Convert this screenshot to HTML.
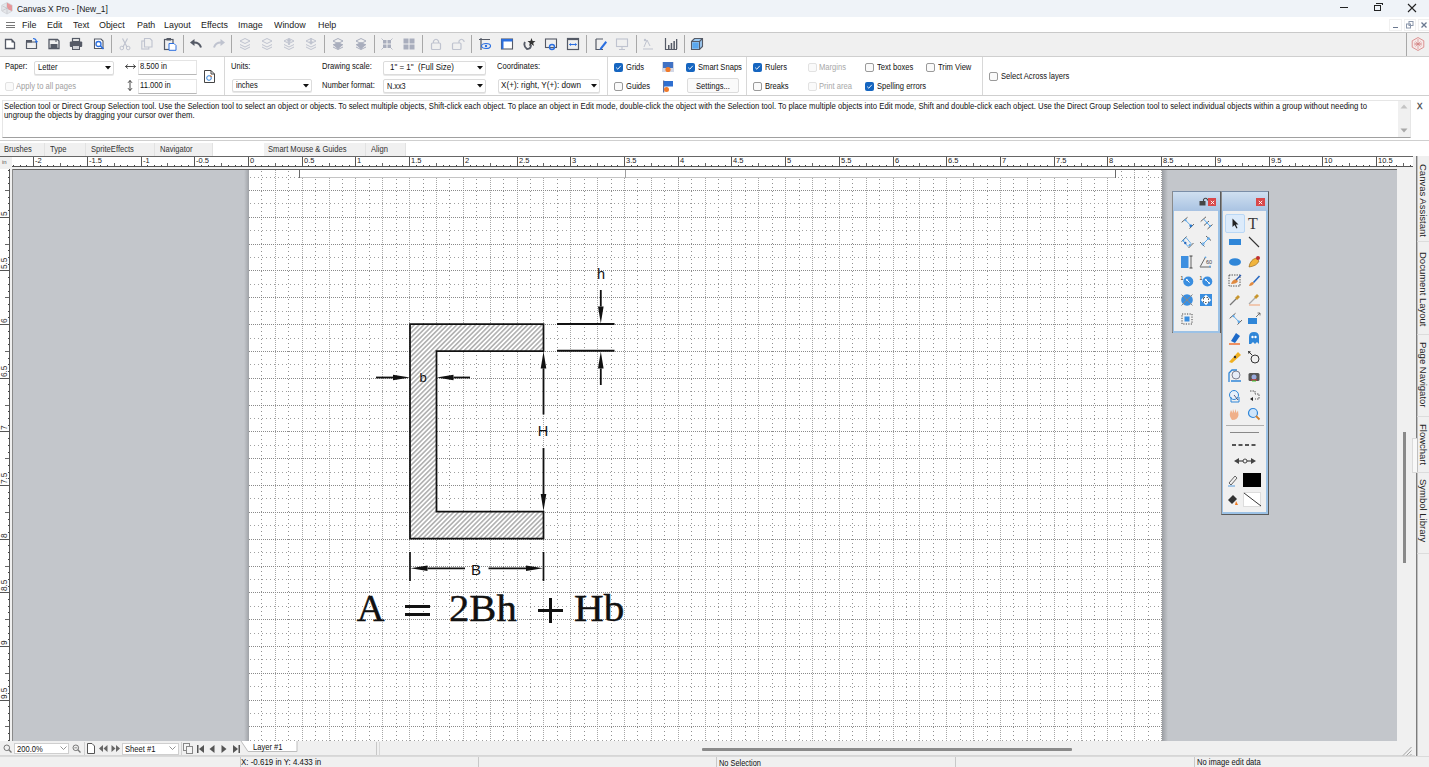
<!DOCTYPE html><html><head><meta charset="utf-8"><style>
html,body{margin:0;padding:0;}
body{width:1429px;height:767px;overflow:hidden;position:relative;background:#f0f0f0;font-family:"Liberation Sans",sans-serif;}
div,svg{box-sizing:border-box;}
svg{position:absolute;}
</style></head><body>
<div style="position:absolute;left:0px;top:0px;width:1429px;height:17px;background:#eff3f8"></div>
<div style="position:absolute;left:17px;top:5.24px;font-size:9.16px;line-height:9.16px;color:#1a1a1a;white-space:nowrap;transform:scaleX(0.9259);transform-origin:0 0;">Canvas X Pro - [New_1]</div>
<div style="position:absolute;left:1340px;top:7px;width:8px;height:1px;background:#222"></div>
<div style="position:absolute;left:1374px;top:5px;width:7px;height:6px;border:1px solid #222"></div>
<div style="position:absolute;left:1376px;top:3px;width:7px;height:2px;border-top:1px solid #222;border-right:1px solid #222"></div>
<svg style="left:1407px;top:3px" width="10" height="10"><path d="M1 1L9 9M9 1L1 9" stroke="#222" stroke-width="1.1"/></svg>
<div style="position:absolute;left:0px;top:17px;width:1429px;height:15px;background:#fff"></div>
<div style="position:absolute;left:6px;top:22.0px;width:9px;height:1px;background:#777"></div>
<div style="position:absolute;left:6px;top:24.5px;width:9px;height:1px;background:#777"></div>
<div style="position:absolute;left:6px;top:27.0px;width:9px;height:1px;background:#777"></div>
<div style="position:absolute;left:21.7px;top:20.31px;font-size:9.79px;line-height:9.79px;color:#1a1a1a;white-space:nowrap;transform:scaleX(0.9091);transform-origin:0 0;">File</div>
<div style="position:absolute;left:46.6px;top:20.31px;font-size:9.79px;line-height:9.79px;color:#1a1a1a;white-space:nowrap;transform:scaleX(0.9091);transform-origin:0 0;">Edit</div>
<div style="position:absolute;left:72.8px;top:20.31px;font-size:9.79px;line-height:9.79px;color:#1a1a1a;white-space:nowrap;transform:scaleX(0.9091);transform-origin:0 0;">Text</div>
<div style="position:absolute;left:99.4px;top:20.31px;font-size:9.79px;line-height:9.79px;color:#1a1a1a;white-space:nowrap;transform:scaleX(0.9091);transform-origin:0 0;">Object</div>
<div style="position:absolute;left:136.5px;top:20.31px;font-size:9.79px;line-height:9.79px;color:#1a1a1a;white-space:nowrap;transform:scaleX(0.9091);transform-origin:0 0;">Path</div>
<div style="position:absolute;left:164px;top:20.31px;font-size:9.79px;line-height:9.79px;color:#1a1a1a;white-space:nowrap;transform:scaleX(0.9091);transform-origin:0 0;">Layout</div>
<div style="position:absolute;left:201.3px;top:20.31px;font-size:9.79px;line-height:9.79px;color:#1a1a1a;white-space:nowrap;transform:scaleX(0.9091);transform-origin:0 0;">Effects</div>
<div style="position:absolute;left:238px;top:20.31px;font-size:9.79px;line-height:9.79px;color:#1a1a1a;white-space:nowrap;transform:scaleX(0.9091);transform-origin:0 0;">Image</div>
<div style="position:absolute;left:274px;top:20.31px;font-size:9.79px;line-height:9.79px;color:#1a1a1a;white-space:nowrap;transform:scaleX(0.9091);transform-origin:0 0;">Window</div>
<div style="position:absolute;left:317.9px;top:20.31px;font-size:9.79px;line-height:9.79px;color:#1a1a1a;white-space:nowrap;transform:scaleX(0.9091);transform-origin:0 0;">Help</div>
<div style="position:absolute;left:0px;top:32px;width:1429px;height:1px;background:#c9c9c9"></div>
<div style="position:absolute;left:0px;top:33px;width:1429px;height:23px;background:#f0f0f0"></div>
<div style="position:absolute;left:0px;top:56px;width:1429px;height:1px;background:#cfcfcf"></div>
<svg style="left:2.5999999999999996px;top:37.0px" width="14" height="14"><path d="M2.5,2.5 L8.5,2.5 L11.5,5.5 L11.5,11.5 L2.5,11.5Z" fill="#fff" stroke="#555a66" stroke-width="1.3"/><path d="M8.5,2.5 L11.5,5.5 L8.5,5.5Z" fill="#555a66"/></svg>
<svg style="left:25.0px;top:37.0px" width="14" height="14"><path d="M1.5,5 L11.5,5 L11.5,11.5 L1.5,11.5Z" fill="none" stroke="#555a66" stroke-width="1.2"/><rect x="1" y="3" width="6" height="2.5" fill="#555a66"/><path d="M8,1.5 Q11,1.5 11.5,4.5" stroke="#2b6fe0" stroke-width="1.1" fill="none"/><path d="M9.8,4 L13,4 L11.4,6.5Z" fill="#2b6fe0"/></svg>
<svg style="left:47.0px;top:37.0px" width="14" height="14"><path d="M2,2.5 L10.5,2.5 L12,4 L12,11.5 L2,11.5Z" fill="none" stroke="#555a66" stroke-width="1.3"/><rect x="3.5" y="7" width="7" height="4.5" fill="#555a66"/><rect x="8.5" y="3" width="1" height="2" fill="#555a66"/></svg>
<svg style="left:69.0px;top:37.0px" width="14" height="14"><rect x="3.5" y="1.5" width="7" height="3" fill="none" stroke="#555a66" stroke-width="1.2"/><rect x="0.8" y="4.5" width="12.4" height="5.5" rx="1" fill="#555a66"/><rect x="3.5" y="8.5" width="7" height="4" fill="#cfd1d6" stroke="#555a66" stroke-width="1"/></svg>
<svg style="left:91.8px;top:37.0px" width="14" height="14"><path d="M2.5,2 L9,2 L11,4 L11,11.5 L2.5,11.5Z" fill="#fff" stroke="#555a66" stroke-width="1.1"/><circle cx="6.5" cy="7" r="2.5" fill="none" stroke="#2b6fe0" stroke-width="1.3"/><path d="M8.3,8.8 L11.5,12" stroke="#2b6fe0" stroke-width="1.6"/></svg>
<div style="position:absolute;left:111.3px;top:35px;width:1px;height:18px;background:#a8a8a8"></div>
<div style="position:absolute;left:182.5px;top:35px;width:1px;height:18px;background:#a8a8a8"></div>
<div style="position:absolute;left:231px;top:35px;width:1px;height:18px;background:#a8a8a8"></div>
<div style="position:absolute;left:324.4px;top:35px;width:1px;height:18px;background:#a8a8a8"></div>
<div style="position:absolute;left:373.6px;top:35px;width:1px;height:18px;background:#a8a8a8"></div>
<div style="position:absolute;left:421.8px;top:35px;width:1px;height:18px;background:#a8a8a8"></div>
<div style="position:absolute;left:471.3px;top:35px;width:1px;height:18px;background:#a8a8a8"></div>
<div style="position:absolute;left:586px;top:35px;width:1px;height:18px;background:#a8a8a8"></div>
<div style="position:absolute;left:635.6px;top:35px;width:1px;height:18px;background:#a8a8a8"></div>
<div style="position:absolute;left:684px;top:35px;width:1px;height:18px;background:#a8a8a8"></div>
<svg style="left:118.3px;top:37.0px" width="14" height="14"><path d="M4.5,1.5 L9,10 M9.5,1.5 L5,10" stroke="#bfc3cf" stroke-width="1.2"/><circle cx="3.8" cy="11" r="1.8" fill="none" stroke="#bfc3cf" stroke-width="1"/><circle cx="10.2" cy="11" r="1.8" fill="none" stroke="#bfc3cf" stroke-width="1"/></svg>
<svg style="left:140.4px;top:37.0px" width="14" height="14"><rect x="1.8" y="4" width="7" height="8" fill="none" stroke="#bfc3cf" stroke-width="1.1"/><path d="M4.5,1.5 L10,1.5 L12,3.5 L12,10 L4.5,10Z" fill="#f0f0f0" stroke="#bfc3cf" stroke-width="1.1"/></svg>
<svg style="left:163.0px;top:37.0px" width="14" height="14"><rect x="1.5" y="2.5" width="8.5" height="10" fill="none" stroke="#555a66" stroke-width="1.2"/><rect x="3.5" y="1" width="4.5" height="2.5" fill="#555a66"/><path d="M6,6.5 L11,6.5 L13,8.5 L13,13.3 L6,13.3Z" fill="#fff" stroke="#2b6fe0" stroke-width="1"/></svg>
<svg style="left:189.0px;top:37.0px" width="14" height="14"><path d="M12,10.5 Q10.5,5 4,5.5" stroke="#555a66" stroke-width="2" fill="none"/><path d="M1,5.5 L5.5,2 L5.5,9Z" fill="#555a66"/></svg>
<svg style="left:211.5px;top:37.0px" width="14" height="14"><path d="M2,10.5 Q3.5,5 10,5.5" stroke="#bfc3cf" stroke-width="2" fill="none"/><path d="M13,5.5 L8.5,2 L8.5,9Z" fill="#bfc3cf"/></svg>
<svg style="left:237.8px;top:37.0px" width="14" height="14"><path d="M7,1.5 L12,4 L7,6.5 L2,4Z" fill="none" stroke="#bfc3cf" stroke-width="1"/><path d="M2,7.5 L7,10 L12,7.5" fill="none" stroke="#bfc3cf" stroke-width="1"/><path d="M2,10 L7,12.5 L12,10" fill="none" stroke="#bfc3cf" stroke-width="1"/></svg>
<svg style="left:260.0px;top:37.0px" width="14" height="14"><path d="M7,1.5 L12,4 L7,6.5 L2,4Z" fill="none" stroke="#bfc3cf" stroke-width="1"/><path d="M2,7.5 L7,10 L12,7.5" fill="none" stroke="#bfc3cf" stroke-width="1"/><path d="M2,10 L7,12.5 L12,10" fill="none" stroke="#bfc3cf" stroke-width="1"/></svg>
<svg style="left:282.0px;top:37.0px" width="14" height="14"><path d="M7,1.5 L12,4 L7,6.5 L2,4Z" fill="none" stroke="#bfc3cf" stroke-width="1"/><path d="M2,7.5 L7,10 L12,7.5" fill="none" stroke="#bfc3cf" stroke-width="1"/><path d="M2,10 L7,12.5 L12,10" fill="none" stroke="#bfc3cf" stroke-width="1"/><path d="M7,1 L9.5,4.5 L4.5,4.5Z M6.2,4.5 H7.8 V8 H6.2Z" fill="#bfc3cf"/></svg>
<svg style="left:304.0px;top:37.0px" width="14" height="14"><path d="M7,1.5 L12,4 L7,6.5 L2,4Z" fill="none" stroke="#bfc3cf" stroke-width="1"/><path d="M2,7.5 L7,10 L12,7.5" fill="none" stroke="#bfc3cf" stroke-width="1"/><path d="M2,10 L7,12.5 L12,10" fill="none" stroke="#bfc3cf" stroke-width="1"/><path d="M7,8 L9.5,4.5 L4.5,4.5Z M6.2,1 H7.8 V4.5 H6.2Z" fill="#bfc3cf"/></svg>
<svg style="left:331.0px;top:37.0px" width="14" height="14"><path d="M7,1.5 L12,4 L7,6.5 L2,4Z" fill="none" stroke="#a9aebd" stroke-width="1"/><path d="M2,7.5 L7,10 L12,7.5" fill="none" stroke="#a9aebd" stroke-width="1"/><path d="M2,10 L7,12.5 L12,10" fill="none" stroke="#a9aebd" stroke-width="1"/><path d="M2,7.5 L7,5 L12,7.5 L7,12.5Z" fill="#a9aebd"/></svg>
<svg style="left:353.5px;top:37.0px" width="14" height="14"><path d="M7,1.5 L12,4 L7,6.5 L2,4Z" fill="none" stroke="#a9aebd" stroke-width="1"/><path d="M2,7.5 L7,10 L12,7.5" fill="none" stroke="#a9aebd" stroke-width="1"/><path d="M2,10 L7,12.5 L12,10" fill="none" stroke="#a9aebd" stroke-width="1"/><path d="M2,7.5 L7,5 L12,7.5 L7,12.5Z" fill="#a9aebd"/></svg>
<svg style="left:380.0px;top:37.0px" width="14" height="14"><rect x="3" y="3" width="3.5" height="3.5" fill="#a9aebd"/><rect x="7.5" y="3" width="3.5" height="3.5" fill="#a9aebd"/><rect x="3" y="7.5" width="3.5" height="3.5" fill="#a9aebd"/><rect x="7.5" y="7.5" width="3.5" height="3.5" fill="#a9aebd"/><path d="M1.5,1.5 L3,3 M12.5,1.5 L11,3 M1.5,12.5 L3,11 M12.5,12.5 L11,11" stroke="#a9aebd" stroke-width="0.8"/></svg>
<svg style="left:402.0px;top:37.0px" width="14" height="14"><rect x="1.5" y="1.5" width="5" height="5" fill="#a9aebd"/><rect x="7.5" y="1.5" width="5" height="5" fill="#a9aebd"/><rect x="1.5" y="7.5" width="5" height="5" fill="#a9aebd"/><rect x="7.5" y="7.5" width="5" height="5" fill="#a9aebd"/></svg>
<svg style="left:428.7px;top:37.0px" width="14" height="14"><rect x="2.5" y="6" width="9" height="6.5" rx="1" fill="none" stroke="#bfc3cf" stroke-width="1.2"/><path d="M4.5,6 V4 Q7,0.5 9.5,4 V6" fill="none" stroke="#bfc3cf" stroke-width="1.2"/></svg>
<svg style="left:451.0px;top:37.0px" width="14" height="14"><rect x="1.5" y="6" width="8.5" height="6.5" rx="1" fill="none" stroke="#bfc3cf" stroke-width="1.2"/><path d="M8,6 V4 Q10.5,0.5 13,4 V5" fill="none" stroke="#bfc3cf" stroke-width="1.2"/></svg>
<svg style="left:478.0px;top:37.0px" width="14" height="14"><path d="M1,2.5 H12 M3,1 V13" stroke="#555a66" stroke-width="1.2"/><ellipse cx="8" cy="9" rx="4.5" ry="2.5" fill="none" stroke="#2b6fe0" stroke-width="1.2"/><circle cx="8" cy="9" r="1.2" fill="#2b6fe0"/></svg>
<svg style="left:500.0px;top:37.0px" width="14" height="14"><rect x="1.5" y="2" width="11" height="10" fill="#fff" stroke="#555a66" stroke-width="1.1"/><rect x="1.5" y="2" width="11" height="2.5" fill="#2b6fe0"/><rect x="1.5" y="2" width="2" height="10" fill="#2b6fe0"/></svg>
<svg style="left:521.8px;top:37.0px" width="14" height="14"><path d="M3,5 Q1,9 5,12 Q9,12 9,8" fill="none" stroke="#555a66" stroke-width="1.8"/><path d="M9.5,1 L10.6,4 L13.5,4 L11.2,6 L12,9 L9.5,7.2 L7,9 L7.8,6 L5.5,4 L8.4,4Z" fill="#333"/></svg>
<svg style="left:544.0px;top:37.0px" width="14" height="14"><rect x="1.5" y="2" width="11" height="8.5" fill="none" stroke="#555a66" stroke-width="1.1"/><circle cx="8" cy="10" r="2.5" fill="none" stroke="#2b6fe0" stroke-width="1.4"/></svg>
<svg style="left:566.0px;top:37.0px" width="14" height="14"><rect x="1.5" y="1.5" width="11" height="11" fill="none" stroke="#555a66" stroke-width="1.2"/><rect x="1.5" y="1.5" width="11" height="1.6" fill="#555a66"/><path d="M3.5,7.5 H10.5" stroke="#2b6fe0" stroke-width="1.1"/><path d="M3,7.5 L5,6 L5,9Z M11,7.5 L9,6 L9,9Z" fill="#2b6fe0"/></svg>
<svg style="left:593.5px;top:37.0px" width="14" height="14"><path d="M2,2 H9 M2,2 V12.5 H9" fill="none" stroke="#555a66" stroke-width="1.2"/><path d="M6,11 L11.5,4 L13,5.5 L7.5,12.5 L5.5,13Z" fill="#2b6fe0"/></svg>
<svg style="left:615.3px;top:37.0px" width="14" height="14"><rect x="1.5" y="2" width="11" height="7.5" fill="none" stroke="#bfc3cf" stroke-width="1.1"/><path d="M7,9.5 V12 M4,12.5 H10" stroke="#bfc3cf" stroke-width="1.1"/></svg>
<svg style="left:641.3px;top:37.0px" width="14" height="14"><path d="M2,12 H12 M3,10 L6,3 L9,9" fill="none" stroke="#bfc3cf" stroke-width="1"/><circle cx="4" cy="3" r="1.2" fill="#bfc3cf"/></svg>
<svg style="left:664.0px;top:37.0px" width="14" height="14"><path d="M1.5,1 V12.5 H13" fill="none" stroke="#555a66" stroke-width="1.2"/><rect x="4" y="8" width="1.5" height="4" fill="#555a66"/><rect x="6.7" y="6" width="1.5" height="6" fill="#555a66"/><rect x="9.4" y="4" width="1.5" height="8" fill="#555a66"/><rect x="12" y="2" width="1.3" height="10" fill="#555a66"/></svg>
<svg style="left:690.4px;top:37.0px" width="14" height="14"><path d="M1.5,4.5 L4.5,1.5 L12.5,1.5 L12.5,9.5 L9.5,12.5 L1.5,12.5Z" fill="#9cc8f0" stroke="#555a66" stroke-width="1.1"/><path d="M1.5,4.5 H9.5 V12.5 M9.5,4.5 L12.5,1.5" fill="none" stroke="#555a66" stroke-width="1.1"/><rect x="2.5" y="5.5" width="6" height="6" fill="#5aa7ee"/></svg>
<div style="position:absolute;left:1405.5px;top:33px;width:1px;height:23px;background:#a8a8a8"></div>
<svg style="left:1410.8px;top:36.8px" width="14" height="14"><path d="M7,0.5 L12.8,3.8 L12.8,10.2 L7,13.5 L1.2,10.2 L1.2,3.8Z" fill="#f6e8e8" stroke="#d98a8a" stroke-width="0.9"/><path d="M3,6 L11,8 M3,8 L11,6 M7,2 V12 M4.5,4.5 L9.5,9.5 M9.5,4.5 L4.5,9.5" stroke="#d07a7a" stroke-width="0.6"/></svg>
<svg style="left:0.0px;top:1.0px" width="14" height="14"><path d="M7,1.5 L12.3,4.3 L12.3,10 L7,13 L1.7,10 L1.7,4.3Z" fill="#e4e6ea" stroke="#d0d2d6" stroke-width="0.8"/><path d="M2.5,5 L11.5,9.5 M2.5,9.5 L11.5,5 M7,2 V12.5" stroke="#b8bcc2" stroke-width="0.6"/><path d="M7,1.8 L12,4.5 L12,10 L8.5,8.5 L7,6Z" fill="#e88a8e" opacity="0.85"/></svg>
<div style="position:absolute;left:1389px;top:18.8px;width:12.5px;height:12px;background:#fff;border:1px solid #f0f0f0"></div>
<div style="position:absolute;left:1403.7px;top:18.8px;width:12.5px;height:12px;background:#fff;border:1px solid #f0f0f0"></div>
<div style="position:absolute;left:1417.8px;top:18.8px;width:12px;height:12px;background:#fff;border:1px solid #f0f0f0"></div>
<div style="position:absolute;left:1393px;top:26.5px;width:5px;height:1.5px;background:#6b7890"></div>
<svg style="left:1406px;top:21px" width="8" height="8"><rect x="0.5" y="3" width="4" height="4" fill="none" stroke="#8a96aa"/><rect x="3" y="0.5" width="4" height="4" fill="none" stroke="#8a96aa"/></svg>
<svg style="left:1421px;top:22px" width="6" height="6"><path d="M0.5,0.5 L5.5,5.5 M5.5,0.5 L0.5,5.5" stroke="#6b7890" stroke-width="1.3"/></svg>
<div style="position:absolute;left:0px;top:57px;width:1429px;height:38px;background:#fff"></div>
<div style="position:absolute;left:0px;top:95px;width:1429px;height:1px;background:#cfcfcf"></div>
<div style="position:absolute;left:0px;top:96px;width:1429px;height:45px;background:#fff"></div>
<div style="position:absolute;left:2px;top:100px;width:1409px;height:38px;background:#fff;border:1px solid #e6e6e6;border-bottom:1px solid #a0a0a0"></div>
<div style="position:absolute;left:0px;top:140px;width:1429px;height:1px;background:#cfcfcf"></div>
<div style="position:absolute;left:0px;top:141px;width:1429px;height:15px;background:#fff"></div>
<div style="position:absolute;left:0px;top:156px;width:1413px;height:11px;background:#fff"></div>
<div style="position:absolute;left:0px;top:156px;width:1413px;height:1px;background:#666"></div>
<div style="position:absolute;left:12px;top:166px;width:1401px;height:1px;background:#555"></div>
<div style="position:absolute;left:0px;top:157px;width:12px;height:12px;background:#f0f0f0"></div>
<div style="position:absolute;left:12px;top:169px;width:1385px;height:572px;background:#c3c6cb"></div>
<div style="position:absolute;left:12px;top:169px;width:1401px;height:1px;background:#666"></div>
<div style="position:absolute;left:248px;top:170px;width:914px;height:571px;background:#fff"></div>
<svg style="left:0;top:0" width="1429" height="767" shape-rendering="crispEdges"><clipPath id="pg"><rect x="249" y="170" width="913" height="571"/></clipPath><g clip-path="url(#pg)"><line x1="261.5" y1="171" x2="261.5" y2="741" stroke="#909090" stroke-dasharray="1 3"/><line x1="275.5" y1="170" x2="275.5" y2="741" stroke="#a6a6a6" stroke-dasharray="1 1"/><line x1="288.5" y1="171" x2="288.5" y2="741" stroke="#909090" stroke-dasharray="1 3"/><line x1="302.5" y1="170" x2="302.5" y2="741" stroke="#a6a6a6" stroke-dasharray="1 1"/><line x1="315.5" y1="171" x2="315.5" y2="741" stroke="#909090" stroke-dasharray="1 3"/><line x1="329.5" y1="170" x2="329.5" y2="741" stroke="#a6a6a6" stroke-dasharray="1 1"/><line x1="342.5" y1="171" x2="342.5" y2="741" stroke="#909090" stroke-dasharray="1 3"/><line x1="355.5" y1="170" x2="355.5" y2="741" stroke="#a6a6a6" stroke-dasharray="1 1"/><line x1="369.5" y1="171" x2="369.5" y2="741" stroke="#909090" stroke-dasharray="1 3"/><line x1="382.5" y1="170" x2="382.5" y2="741" stroke="#a6a6a6" stroke-dasharray="1 1"/><line x1="396.5" y1="171" x2="396.5" y2="741" stroke="#909090" stroke-dasharray="1 3"/><line x1="409.5" y1="170" x2="409.5" y2="741" stroke="#a6a6a6" stroke-dasharray="1 1"/><line x1="423.5" y1="171" x2="423.5" y2="741" stroke="#909090" stroke-dasharray="1 3"/><line x1="436.5" y1="170" x2="436.5" y2="741" stroke="#a6a6a6" stroke-dasharray="1 1"/><line x1="449.5" y1="171" x2="449.5" y2="741" stroke="#909090" stroke-dasharray="1 3"/><line x1="463.5" y1="170" x2="463.5" y2="741" stroke="#a6a6a6" stroke-dasharray="1 1"/><line x1="476.5" y1="171" x2="476.5" y2="741" stroke="#909090" stroke-dasharray="1 3"/><line x1="490.5" y1="170" x2="490.5" y2="741" stroke="#a6a6a6" stroke-dasharray="1 1"/><line x1="503.5" y1="171" x2="503.5" y2="741" stroke="#909090" stroke-dasharray="1 3"/><line x1="517.5" y1="170" x2="517.5" y2="741" stroke="#a6a6a6" stroke-dasharray="1 1"/><line x1="530.5" y1="171" x2="530.5" y2="741" stroke="#909090" stroke-dasharray="1 3"/><line x1="543.5" y1="170" x2="543.5" y2="741" stroke="#a6a6a6" stroke-dasharray="1 1"/><line x1="557.5" y1="171" x2="557.5" y2="741" stroke="#909090" stroke-dasharray="1 3"/><line x1="570.5" y1="170" x2="570.5" y2="741" stroke="#a6a6a6" stroke-dasharray="1 1"/><line x1="584.5" y1="171" x2="584.5" y2="741" stroke="#909090" stroke-dasharray="1 3"/><line x1="597.5" y1="170" x2="597.5" y2="741" stroke="#a6a6a6" stroke-dasharray="1 1"/><line x1="611.5" y1="171" x2="611.5" y2="741" stroke="#909090" stroke-dasharray="1 3"/><line x1="624.5" y1="170" x2="624.5" y2="741" stroke="#a6a6a6" stroke-dasharray="1 1"/><line x1="637.5" y1="171" x2="637.5" y2="741" stroke="#909090" stroke-dasharray="1 3"/><line x1="651.5" y1="170" x2="651.5" y2="741" stroke="#a6a6a6" stroke-dasharray="1 1"/><line x1="664.5" y1="171" x2="664.5" y2="741" stroke="#909090" stroke-dasharray="1 3"/><line x1="678.5" y1="170" x2="678.5" y2="741" stroke="#a6a6a6" stroke-dasharray="1 1"/><line x1="691.5" y1="171" x2="691.5" y2="741" stroke="#909090" stroke-dasharray="1 3"/><line x1="705.5" y1="170" x2="705.5" y2="741" stroke="#a6a6a6" stroke-dasharray="1 1"/><line x1="718.5" y1="171" x2="718.5" y2="741" stroke="#909090" stroke-dasharray="1 3"/><line x1="731.5" y1="170" x2="731.5" y2="741" stroke="#a6a6a6" stroke-dasharray="1 1"/><line x1="745.5" y1="171" x2="745.5" y2="741" stroke="#909090" stroke-dasharray="1 3"/><line x1="758.5" y1="170" x2="758.5" y2="741" stroke="#a6a6a6" stroke-dasharray="1 1"/><line x1="772.5" y1="171" x2="772.5" y2="741" stroke="#909090" stroke-dasharray="1 3"/><line x1="785.5" y1="170" x2="785.5" y2="741" stroke="#a6a6a6" stroke-dasharray="1 1"/><line x1="799.5" y1="171" x2="799.5" y2="741" stroke="#909090" stroke-dasharray="1 3"/><line x1="812.5" y1="170" x2="812.5" y2="741" stroke="#a6a6a6" stroke-dasharray="1 1"/><line x1="825.5" y1="171" x2="825.5" y2="741" stroke="#909090" stroke-dasharray="1 3"/><line x1="839.5" y1="170" x2="839.5" y2="741" stroke="#a6a6a6" stroke-dasharray="1 1"/><line x1="852.5" y1="171" x2="852.5" y2="741" stroke="#909090" stroke-dasharray="1 3"/><line x1="866.5" y1="170" x2="866.5" y2="741" stroke="#a6a6a6" stroke-dasharray="1 1"/><line x1="879.5" y1="171" x2="879.5" y2="741" stroke="#909090" stroke-dasharray="1 3"/><line x1="893.5" y1="170" x2="893.5" y2="741" stroke="#a6a6a6" stroke-dasharray="1 1"/><line x1="906.5" y1="171" x2="906.5" y2="741" stroke="#909090" stroke-dasharray="1 3"/><line x1="919.5" y1="170" x2="919.5" y2="741" stroke="#a6a6a6" stroke-dasharray="1 1"/><line x1="933.5" y1="171" x2="933.5" y2="741" stroke="#909090" stroke-dasharray="1 3"/><line x1="946.5" y1="170" x2="946.5" y2="741" stroke="#a6a6a6" stroke-dasharray="1 1"/><line x1="960.5" y1="171" x2="960.5" y2="741" stroke="#909090" stroke-dasharray="1 3"/><line x1="973.5" y1="170" x2="973.5" y2="741" stroke="#a6a6a6" stroke-dasharray="1 1"/><line x1="987.5" y1="171" x2="987.5" y2="741" stroke="#909090" stroke-dasharray="1 3"/><line x1="1000.5" y1="170" x2="1000.5" y2="741" stroke="#a6a6a6" stroke-dasharray="1 1"/><line x1="1013.5" y1="171" x2="1013.5" y2="741" stroke="#909090" stroke-dasharray="1 3"/><line x1="1027.5" y1="170" x2="1027.5" y2="741" stroke="#a6a6a6" stroke-dasharray="1 1"/><line x1="1040.5" y1="171" x2="1040.5" y2="741" stroke="#909090" stroke-dasharray="1 3"/><line x1="1054.5" y1="170" x2="1054.5" y2="741" stroke="#a6a6a6" stroke-dasharray="1 1"/><line x1="1067.5" y1="171" x2="1067.5" y2="741" stroke="#909090" stroke-dasharray="1 3"/><line x1="1081.5" y1="170" x2="1081.5" y2="741" stroke="#a6a6a6" stroke-dasharray="1 1"/><line x1="1094.5" y1="171" x2="1094.5" y2="741" stroke="#909090" stroke-dasharray="1 3"/><line x1="1107.5" y1="170" x2="1107.5" y2="741" stroke="#a6a6a6" stroke-dasharray="1 1"/><line x1="1121.5" y1="171" x2="1121.5" y2="741" stroke="#909090" stroke-dasharray="1 3"/><line x1="1134.5" y1="170" x2="1134.5" y2="741" stroke="#a6a6a6" stroke-dasharray="1 1"/><line x1="1148.5" y1="171" x2="1148.5" y2="741" stroke="#909090" stroke-dasharray="1 3"/><line x1="1161.5" y1="170" x2="1161.5" y2="741" stroke="#a6a6a6" stroke-dasharray="1 1"/><line x1="250" y1="177.5" x2="1162" y2="177.5" stroke="#a0a0a0" stroke-dasharray="1 3"/><line x1="249" y1="190.5" x2="1162" y2="190.5" stroke="#8a8a8a" stroke-dasharray="1 1"/><line x1="250" y1="203.5" x2="1162" y2="203.5" stroke="#a0a0a0" stroke-dasharray="1 3"/><line x1="249" y1="217.5" x2="1162" y2="217.5" stroke="#8a8a8a" stroke-dasharray="1 1"/><line x1="250" y1="230.5" x2="1162" y2="230.5" stroke="#a0a0a0" stroke-dasharray="1 3"/><line x1="249" y1="244.5" x2="1162" y2="244.5" stroke="#8a8a8a" stroke-dasharray="1 1"/><line x1="250" y1="257.5" x2="1162" y2="257.5" stroke="#a0a0a0" stroke-dasharray="1 3"/><line x1="249" y1="270.5" x2="1162" y2="270.5" stroke="#8a8a8a" stroke-dasharray="1 1"/><line x1="250" y1="284.5" x2="1162" y2="284.5" stroke="#a0a0a0" stroke-dasharray="1 3"/><line x1="249" y1="297.5" x2="1162" y2="297.5" stroke="#8a8a8a" stroke-dasharray="1 1"/><line x1="250" y1="311.5" x2="1162" y2="311.5" stroke="#a0a0a0" stroke-dasharray="1 3"/><line x1="249" y1="324.5" x2="1162" y2="324.5" stroke="#8a8a8a" stroke-dasharray="1 1"/><line x1="250" y1="338.5" x2="1162" y2="338.5" stroke="#a0a0a0" stroke-dasharray="1 3"/><line x1="249" y1="351.5" x2="1162" y2="351.5" stroke="#8a8a8a" stroke-dasharray="1 1"/><line x1="250" y1="364.5" x2="1162" y2="364.5" stroke="#a0a0a0" stroke-dasharray="1 3"/><line x1="249" y1="378.5" x2="1162" y2="378.5" stroke="#8a8a8a" stroke-dasharray="1 1"/><line x1="250" y1="391.5" x2="1162" y2="391.5" stroke="#a0a0a0" stroke-dasharray="1 3"/><line x1="249" y1="405.5" x2="1162" y2="405.5" stroke="#8a8a8a" stroke-dasharray="1 1"/><line x1="250" y1="418.5" x2="1162" y2="418.5" stroke="#a0a0a0" stroke-dasharray="1 3"/><line x1="249" y1="431.5" x2="1162" y2="431.5" stroke="#8a8a8a" stroke-dasharray="1 1"/><line x1="250" y1="445.5" x2="1162" y2="445.5" stroke="#a0a0a0" stroke-dasharray="1 3"/><line x1="249" y1="458.5" x2="1162" y2="458.5" stroke="#8a8a8a" stroke-dasharray="1 1"/><line x1="250" y1="472.5" x2="1162" y2="472.5" stroke="#a0a0a0" stroke-dasharray="1 3"/><line x1="249" y1="485.5" x2="1162" y2="485.5" stroke="#8a8a8a" stroke-dasharray="1 1"/><line x1="250" y1="498.5" x2="1162" y2="498.5" stroke="#a0a0a0" stroke-dasharray="1 3"/><line x1="249" y1="512.5" x2="1162" y2="512.5" stroke="#8a8a8a" stroke-dasharray="1 1"/><line x1="250" y1="525.5" x2="1162" y2="525.5" stroke="#a0a0a0" stroke-dasharray="1 3"/><line x1="249" y1="539.5" x2="1162" y2="539.5" stroke="#8a8a8a" stroke-dasharray="1 1"/><line x1="250" y1="552.5" x2="1162" y2="552.5" stroke="#a0a0a0" stroke-dasharray="1 3"/><line x1="249" y1="566.5" x2="1162" y2="566.5" stroke="#8a8a8a" stroke-dasharray="1 1"/><line x1="250" y1="579.5" x2="1162" y2="579.5" stroke="#a0a0a0" stroke-dasharray="1 3"/><line x1="249" y1="592.5" x2="1162" y2="592.5" stroke="#8a8a8a" stroke-dasharray="1 1"/><line x1="250" y1="606.5" x2="1162" y2="606.5" stroke="#a0a0a0" stroke-dasharray="1 3"/><line x1="249" y1="619.5" x2="1162" y2="619.5" stroke="#8a8a8a" stroke-dasharray="1 1"/><line x1="250" y1="633.5" x2="1162" y2="633.5" stroke="#a0a0a0" stroke-dasharray="1 3"/><line x1="249" y1="646.5" x2="1162" y2="646.5" stroke="#8a8a8a" stroke-dasharray="1 1"/><line x1="250" y1="659.5" x2="1162" y2="659.5" stroke="#a0a0a0" stroke-dasharray="1 3"/><line x1="249" y1="673.5" x2="1162" y2="673.5" stroke="#8a8a8a" stroke-dasharray="1 1"/><line x1="250" y1="686.5" x2="1162" y2="686.5" stroke="#a0a0a0" stroke-dasharray="1 3"/><line x1="249" y1="700.5" x2="1162" y2="700.5" stroke="#8a8a8a" stroke-dasharray="1 1"/><line x1="250" y1="713.5" x2="1162" y2="713.5" stroke="#a0a0a0" stroke-dasharray="1 3"/><line x1="249" y1="726.5" x2="1162" y2="726.5" stroke="#8a8a8a" stroke-dasharray="1 1"/><line x1="250" y1="740.5" x2="1162" y2="740.5" stroke="#a0a0a0" stroke-dasharray="1 3"/></g></svg>
<div style="position:absolute;left:244px;top:170px;width:5px;height:571px;background:linear-gradient(to right,#c3c6cb,#9fa2a7)"></div>
<div style="position:absolute;left:1162px;top:170px;width:6px;height:571px;background:linear-gradient(to right,#9a9da2,#c3c6cb)"></div>
<div style="position:absolute;left:300px;top:170px;width:815px;height:7px;background:#fff"></div>
<div style="position:absolute;left:299px;top:177px;width:817px;height:1px;background:#c4c4c4"></div>
<div style="position:absolute;left:299px;top:170px;width:1px;height:8px;background:#6a6a6a"></div>
<div style="position:absolute;left:625px;top:170px;width:1px;height:8px;background:#a0a0a0"></div>
<div style="position:absolute;left:1115px;top:170px;width:1px;height:8px;background:#6a6a6a"></div>
<svg style="left:0;top:0" width="1429" height="767"><defs><pattern id="hatch" patternUnits="userSpaceOnUse" width="3.34" height="3.34" patternTransform="rotate(45)"><line x1="1.67" y1="0" x2="1.67" y2="3.34" stroke="#2a2a2a" stroke-width="0.6"/></pattern></defs><path d="M410,324 L543.5,324 L543.5,351 L436.5,351 L436.5,511.5 L543.5,511.5 L543.5,538.5 L410,538.5 Z" fill="#fff"/><path d="M410,324 L543.5,324 L543.5,351 L436.5,351 L436.5,511.5 L543.5,511.5 L543.5,538.5 L410,538.5 Z" fill="url(#hatch)"/><path d="M410,324 L543.5,324 L543.5,351 L436.5,351 L436.5,511.5 L543.5,511.5 L543.5,538.5 L410,538.5 Z" fill="none" stroke="#111" stroke-width="1.75" stroke-linejoin="miter"/><line x1="376" y1="377.5" x2="393.0" y2="377.5" stroke="#111" stroke-width="1.8"/><path d="M410,377.5 L393.0,380.3 L393.0,374.7 Z" fill="#111"/><line x1="470" y1="377.5" x2="453.5" y2="377.5" stroke="#111" stroke-width="1.8"/><path d="M436.5,377.5 L453.5,374.7 L453.5,380.3 Z" fill="#111"/><line x1="600.8" y1="290" x2="600.8" y2="306.5" stroke="#111" stroke-width="1.8"/><path d="M600.8,323.5 L598.0,306.5 L603.5999999999999,306.5 Z" fill="#111"/><line x1="600.8" y1="385" x2="600.8" y2="368.5" stroke="#111" stroke-width="1.8"/><path d="M600.8,351.5 L603.5999999999999,368.5 L598.0,368.5 Z" fill="#111"/><line x1="557" y1="324" x2="614.5" y2="324" stroke="#111" stroke-width="1.9"/><line x1="557" y1="350.8" x2="614.5" y2="350.8" stroke="#111" stroke-width="1.9"/><line x1="543.5" y1="414.5" x2="543.5" y2="368.5" stroke="#111" stroke-width="1.8"/><path d="M543.5,351.5 L546.3,368.5 L540.7,368.5 Z" fill="#111"/><line x1="543.5" y1="448" x2="543.5" y2="494.0" stroke="#111" stroke-width="1.8"/><path d="M543.5,511 L540.7,494.0 L546.3,494.0 Z" fill="#111"/><line x1="410" y1="552" x2="410" y2="581" stroke="#111" stroke-width="1.7"/><line x1="543.5" y1="552" x2="543.5" y2="581" stroke="#111" stroke-width="1.7"/><line x1="465" y1="568.3" x2="427.5" y2="568.3" stroke="#111" stroke-width="1.8"/><path d="M410.5,568.3 L427.5,565.5 L427.5,571.0999999999999 Z" fill="#111"/><line x1="488.5" y1="568.3" x2="526.0" y2="568.3" stroke="#111" stroke-width="1.8"/><path d="M543,568.3 L526.0,571.0999999999999 L526.0,565.5 Z" fill="#111"/></svg>
<div style="position:absolute;left:419.5px;top:370.80px;font-size:13.00px;line-height:13.00px;color:#111;white-space:nowrap;">b</div>
<div style="position:absolute;left:597px;top:266.53px;font-size:14.50px;line-height:14.50px;color:#111;white-space:nowrap;">h</div>
<div style="position:absolute;left:537.8px;top:424.23px;font-size:14.50px;line-height:14.50px;color:#111;white-space:nowrap;">H</div>
<div style="position:absolute;left:471px;top:561.60px;font-size:15.00px;line-height:15.00px;color:#111;white-space:nowrap;">B</div>
<div style="position:absolute;left:0px;top:169px;width:9px;height:572px;background:#fff"></div>
<div style="position:absolute;left:9px;top:169px;width:1px;height:572px;background:#555"></div>
<div style="position:absolute;left:10px;top:169px;width:2px;height:572px;background:#f0f0f0"></div>
<div style="position:absolute;left:12px;top:169px;width:1px;height:572px;background:#8a8a8a"></div>
<svg style="left:0;top:0" width="1429" height="767" shape-rendering="crispEdges"><line x1="13.5" y1="165" x2="13.5" y2="166" stroke="#444"/><line x1="20.5" y1="165" x2="20.5" y2="166" stroke="#444"/><line x1="26.5" y1="165" x2="26.5" y2="166" stroke="#444"/><line x1="33.5" y1="157" x2="33.5" y2="166" stroke="#555"/><line x1="40.5" y1="165" x2="40.5" y2="166" stroke="#444"/><line x1="47.5" y1="165" x2="47.5" y2="166" stroke="#444"/><line x1="53.5" y1="165" x2="53.5" y2="166" stroke="#444"/><line x1="60.5" y1="162.5" x2="60.5" y2="166" stroke="#666"/><line x1="67.5" y1="165" x2="67.5" y2="166" stroke="#444"/><line x1="73.5" y1="165" x2="73.5" y2="166" stroke="#444"/><line x1="80.5" y1="165" x2="80.5" y2="166" stroke="#444"/><line x1="87.5" y1="157" x2="87.5" y2="166" stroke="#555"/><line x1="94.5" y1="165" x2="94.5" y2="166" stroke="#444"/><line x1="100.5" y1="165" x2="100.5" y2="166" stroke="#444"/><line x1="107.5" y1="165" x2="107.5" y2="166" stroke="#444"/><line x1="114.5" y1="162.5" x2="114.5" y2="166" stroke="#666"/><line x1="120.5" y1="165" x2="120.5" y2="166" stroke="#444"/><line x1="127.5" y1="165" x2="127.5" y2="166" stroke="#444"/><line x1="134.5" y1="165" x2="134.5" y2="166" stroke="#444"/><line x1="141.5" y1="157" x2="141.5" y2="166" stroke="#555"/><line x1="147.5" y1="165" x2="147.5" y2="166" stroke="#444"/><line x1="154.5" y1="165" x2="154.5" y2="166" stroke="#444"/><line x1="161.5" y1="165" x2="161.5" y2="166" stroke="#444"/><line x1="167.5" y1="162.5" x2="167.5" y2="166" stroke="#666"/><line x1="174.5" y1="165" x2="174.5" y2="166" stroke="#444"/><line x1="181.5" y1="165" x2="181.5" y2="166" stroke="#444"/><line x1="188.5" y1="165" x2="188.5" y2="166" stroke="#444"/><line x1="194.5" y1="157" x2="194.5" y2="166" stroke="#555"/><line x1="201.5" y1="165" x2="201.5" y2="166" stroke="#444"/><line x1="208.5" y1="165" x2="208.5" y2="166" stroke="#444"/><line x1="214.5" y1="165" x2="214.5" y2="166" stroke="#444"/><line x1="221.5" y1="162.5" x2="221.5" y2="166" stroke="#666"/><line x1="228.5" y1="165" x2="228.5" y2="166" stroke="#444"/><line x1="235.5" y1="165" x2="235.5" y2="166" stroke="#444"/><line x1="241.5" y1="165" x2="241.5" y2="166" stroke="#444"/><line x1="248.5" y1="157" x2="248.5" y2="166" stroke="#555"/><line x1="255.5" y1="165" x2="255.5" y2="166" stroke="#444"/><line x1="261.5" y1="165" x2="261.5" y2="166" stroke="#444"/><line x1="268.5" y1="165" x2="268.5" y2="166" stroke="#444"/><line x1="275.5" y1="162.5" x2="275.5" y2="166" stroke="#666"/><line x1="282.5" y1="165" x2="282.5" y2="166" stroke="#444"/><line x1="288.5" y1="165" x2="288.5" y2="166" stroke="#444"/><line x1="295.5" y1="165" x2="295.5" y2="166" stroke="#444"/><line x1="302.5" y1="157" x2="302.5" y2="166" stroke="#555"/><line x1="308.5" y1="165" x2="308.5" y2="166" stroke="#444"/><line x1="315.5" y1="165" x2="315.5" y2="166" stroke="#444"/><line x1="322.5" y1="165" x2="322.5" y2="166" stroke="#444"/><line x1="329.5" y1="162.5" x2="329.5" y2="166" stroke="#666"/><line x1="335.5" y1="165" x2="335.5" y2="166" stroke="#444"/><line x1="342.5" y1="165" x2="342.5" y2="166" stroke="#444"/><line x1="349.5" y1="165" x2="349.5" y2="166" stroke="#444"/><line x1="355.5" y1="157" x2="355.5" y2="166" stroke="#555"/><line x1="362.5" y1="165" x2="362.5" y2="166" stroke="#444"/><line x1="369.5" y1="165" x2="369.5" y2="166" stroke="#444"/><line x1="376.5" y1="165" x2="376.5" y2="166" stroke="#444"/><line x1="382.5" y1="162.5" x2="382.5" y2="166" stroke="#666"/><line x1="389.5" y1="165" x2="389.5" y2="166" stroke="#444"/><line x1="396.5" y1="165" x2="396.5" y2="166" stroke="#444"/><line x1="402.5" y1="165" x2="402.5" y2="166" stroke="#444"/><line x1="409.5" y1="157" x2="409.5" y2="166" stroke="#555"/><line x1="416.5" y1="165" x2="416.5" y2="166" stroke="#444"/><line x1="423.5" y1="165" x2="423.5" y2="166" stroke="#444"/><line x1="429.5" y1="165" x2="429.5" y2="166" stroke="#444"/><line x1="436.5" y1="162.5" x2="436.5" y2="166" stroke="#666"/><line x1="443.5" y1="165" x2="443.5" y2="166" stroke="#444"/><line x1="449.5" y1="165" x2="449.5" y2="166" stroke="#444"/><line x1="456.5" y1="165" x2="456.5" y2="166" stroke="#444"/><line x1="463.5" y1="157" x2="463.5" y2="166" stroke="#555"/><line x1="470.5" y1="165" x2="470.5" y2="166" stroke="#444"/><line x1="476.5" y1="165" x2="476.5" y2="166" stroke="#444"/><line x1="483.5" y1="165" x2="483.5" y2="166" stroke="#444"/><line x1="490.5" y1="162.5" x2="490.5" y2="166" stroke="#666"/><line x1="496.5" y1="165" x2="496.5" y2="166" stroke="#444"/><line x1="503.5" y1="165" x2="503.5" y2="166" stroke="#444"/><line x1="510.5" y1="165" x2="510.5" y2="166" stroke="#444"/><line x1="517.5" y1="157" x2="517.5" y2="166" stroke="#555"/><line x1="523.5" y1="165" x2="523.5" y2="166" stroke="#444"/><line x1="530.5" y1="165" x2="530.5" y2="166" stroke="#444"/><line x1="537.5" y1="165" x2="537.5" y2="166" stroke="#444"/><line x1="543.5" y1="162.5" x2="543.5" y2="166" stroke="#666"/><line x1="550.5" y1="165" x2="550.5" y2="166" stroke="#444"/><line x1="557.5" y1="165" x2="557.5" y2="166" stroke="#444"/><line x1="564.5" y1="165" x2="564.5" y2="166" stroke="#444"/><line x1="570.5" y1="157" x2="570.5" y2="166" stroke="#555"/><line x1="577.5" y1="165" x2="577.5" y2="166" stroke="#444"/><line x1="584.5" y1="165" x2="584.5" y2="166" stroke="#444"/><line x1="590.5" y1="165" x2="590.5" y2="166" stroke="#444"/><line x1="597.5" y1="162.5" x2="597.5" y2="166" stroke="#666"/><line x1="604.5" y1="165" x2="604.5" y2="166" stroke="#444"/><line x1="611.5" y1="165" x2="611.5" y2="166" stroke="#444"/><line x1="617.5" y1="165" x2="617.5" y2="166" stroke="#444"/><line x1="624.5" y1="157" x2="624.5" y2="166" stroke="#555"/><line x1="631.5" y1="165" x2="631.5" y2="166" stroke="#444"/><line x1="637.5" y1="165" x2="637.5" y2="166" stroke="#444"/><line x1="644.5" y1="165" x2="644.5" y2="166" stroke="#444"/><line x1="651.5" y1="162.5" x2="651.5" y2="166" stroke="#666"/><line x1="658.5" y1="165" x2="658.5" y2="166" stroke="#444"/><line x1="664.5" y1="165" x2="664.5" y2="166" stroke="#444"/><line x1="671.5" y1="165" x2="671.5" y2="166" stroke="#444"/><line x1="678.5" y1="157" x2="678.5" y2="166" stroke="#555"/><line x1="684.5" y1="165" x2="684.5" y2="166" stroke="#444"/><line x1="691.5" y1="165" x2="691.5" y2="166" stroke="#444"/><line x1="698.5" y1="165" x2="698.5" y2="166" stroke="#444"/><line x1="705.5" y1="162.5" x2="705.5" y2="166" stroke="#666"/><line x1="711.5" y1="165" x2="711.5" y2="166" stroke="#444"/><line x1="718.5" y1="165" x2="718.5" y2="166" stroke="#444"/><line x1="725.5" y1="165" x2="725.5" y2="166" stroke="#444"/><line x1="731.5" y1="157" x2="731.5" y2="166" stroke="#555"/><line x1="738.5" y1="165" x2="738.5" y2="166" stroke="#444"/><line x1="745.5" y1="165" x2="745.5" y2="166" stroke="#444"/><line x1="752.5" y1="165" x2="752.5" y2="166" stroke="#444"/><line x1="758.5" y1="162.5" x2="758.5" y2="166" stroke="#666"/><line x1="765.5" y1="165" x2="765.5" y2="166" stroke="#444"/><line x1="772.5" y1="165" x2="772.5" y2="166" stroke="#444"/><line x1="778.5" y1="165" x2="778.5" y2="166" stroke="#444"/><line x1="785.5" y1="157" x2="785.5" y2="166" stroke="#555"/><line x1="792.5" y1="165" x2="792.5" y2="166" stroke="#444"/><line x1="799.5" y1="165" x2="799.5" y2="166" stroke="#444"/><line x1="805.5" y1="165" x2="805.5" y2="166" stroke="#444"/><line x1="812.5" y1="162.5" x2="812.5" y2="166" stroke="#666"/><line x1="819.5" y1="165" x2="819.5" y2="166" stroke="#444"/><line x1="825.5" y1="165" x2="825.5" y2="166" stroke="#444"/><line x1="832.5" y1="165" x2="832.5" y2="166" stroke="#444"/><line x1="839.5" y1="157" x2="839.5" y2="166" stroke="#555"/><line x1="846.5" y1="165" x2="846.5" y2="166" stroke="#444"/><line x1="852.5" y1="165" x2="852.5" y2="166" stroke="#444"/><line x1="859.5" y1="165" x2="859.5" y2="166" stroke="#444"/><line x1="866.5" y1="162.5" x2="866.5" y2="166" stroke="#666"/><line x1="872.5" y1="165" x2="872.5" y2="166" stroke="#444"/><line x1="879.5" y1="165" x2="879.5" y2="166" stroke="#444"/><line x1="886.5" y1="165" x2="886.5" y2="166" stroke="#444"/><line x1="893.5" y1="157" x2="893.5" y2="166" stroke="#555"/><line x1="899.5" y1="165" x2="899.5" y2="166" stroke="#444"/><line x1="906.5" y1="165" x2="906.5" y2="166" stroke="#444"/><line x1="913.5" y1="165" x2="913.5" y2="166" stroke="#444"/><line x1="919.5" y1="162.5" x2="919.5" y2="166" stroke="#666"/><line x1="926.5" y1="165" x2="926.5" y2="166" stroke="#444"/><line x1="933.5" y1="165" x2="933.5" y2="166" stroke="#444"/><line x1="940.5" y1="165" x2="940.5" y2="166" stroke="#444"/><line x1="946.5" y1="157" x2="946.5" y2="166" stroke="#555"/><line x1="953.5" y1="165" x2="953.5" y2="166" stroke="#444"/><line x1="960.5" y1="165" x2="960.5" y2="166" stroke="#444"/><line x1="966.5" y1="165" x2="966.5" y2="166" stroke="#444"/><line x1="973.5" y1="162.5" x2="973.5" y2="166" stroke="#666"/><line x1="980.5" y1="165" x2="980.5" y2="166" stroke="#444"/><line x1="987.5" y1="165" x2="987.5" y2="166" stroke="#444"/><line x1="993.5" y1="165" x2="993.5" y2="166" stroke="#444"/><line x1="1000.5" y1="157" x2="1000.5" y2="166" stroke="#555"/><line x1="1007.5" y1="165" x2="1007.5" y2="166" stroke="#444"/><line x1="1013.5" y1="165" x2="1013.5" y2="166" stroke="#444"/><line x1="1020.5" y1="165" x2="1020.5" y2="166" stroke="#444"/><line x1="1027.5" y1="162.5" x2="1027.5" y2="166" stroke="#666"/><line x1="1034.5" y1="165" x2="1034.5" y2="166" stroke="#444"/><line x1="1040.5" y1="165" x2="1040.5" y2="166" stroke="#444"/><line x1="1047.5" y1="165" x2="1047.5" y2="166" stroke="#444"/><line x1="1054.5" y1="157" x2="1054.5" y2="166" stroke="#555"/><line x1="1060.5" y1="165" x2="1060.5" y2="166" stroke="#444"/><line x1="1067.5" y1="165" x2="1067.5" y2="166" stroke="#444"/><line x1="1074.5" y1="165" x2="1074.5" y2="166" stroke="#444"/><line x1="1081.5" y1="162.5" x2="1081.5" y2="166" stroke="#666"/><line x1="1087.5" y1="165" x2="1087.5" y2="166" stroke="#444"/><line x1="1094.5" y1="165" x2="1094.5" y2="166" stroke="#444"/><line x1="1101.5" y1="165" x2="1101.5" y2="166" stroke="#444"/><line x1="1107.5" y1="157" x2="1107.5" y2="166" stroke="#555"/><line x1="1114.5" y1="165" x2="1114.5" y2="166" stroke="#444"/><line x1="1121.5" y1="165" x2="1121.5" y2="166" stroke="#444"/><line x1="1128.5" y1="165" x2="1128.5" y2="166" stroke="#444"/><line x1="1134.5" y1="162.5" x2="1134.5" y2="166" stroke="#666"/><line x1="1141.5" y1="165" x2="1141.5" y2="166" stroke="#444"/><line x1="1148.5" y1="165" x2="1148.5" y2="166" stroke="#444"/><line x1="1154.5" y1="165" x2="1154.5" y2="166" stroke="#444"/><line x1="1161.5" y1="157" x2="1161.5" y2="166" stroke="#555"/><line x1="1168.5" y1="165" x2="1168.5" y2="166" stroke="#444"/><line x1="1175.5" y1="165" x2="1175.5" y2="166" stroke="#444"/><line x1="1181.5" y1="165" x2="1181.5" y2="166" stroke="#444"/><line x1="1188.5" y1="162.5" x2="1188.5" y2="166" stroke="#666"/><line x1="1195.5" y1="165" x2="1195.5" y2="166" stroke="#444"/><line x1="1201.5" y1="165" x2="1201.5" y2="166" stroke="#444"/><line x1="1208.5" y1="165" x2="1208.5" y2="166" stroke="#444"/><line x1="1215.5" y1="157" x2="1215.5" y2="166" stroke="#555"/><line x1="1222.5" y1="165" x2="1222.5" y2="166" stroke="#444"/><line x1="1228.5" y1="165" x2="1228.5" y2="166" stroke="#444"/><line x1="1235.5" y1="165" x2="1235.5" y2="166" stroke="#444"/><line x1="1242.5" y1="162.5" x2="1242.5" y2="166" stroke="#666"/><line x1="1248.5" y1="165" x2="1248.5" y2="166" stroke="#444"/><line x1="1255.5" y1="165" x2="1255.5" y2="166" stroke="#444"/><line x1="1262.5" y1="165" x2="1262.5" y2="166" stroke="#444"/><line x1="1269.5" y1="157" x2="1269.5" y2="166" stroke="#555"/><line x1="1275.5" y1="165" x2="1275.5" y2="166" stroke="#444"/><line x1="1282.5" y1="165" x2="1282.5" y2="166" stroke="#444"/><line x1="1289.5" y1="165" x2="1289.5" y2="166" stroke="#444"/><line x1="1295.5" y1="162.5" x2="1295.5" y2="166" stroke="#666"/><line x1="1302.5" y1="165" x2="1302.5" y2="166" stroke="#444"/><line x1="1309.5" y1="165" x2="1309.5" y2="166" stroke="#444"/><line x1="1316.5" y1="165" x2="1316.5" y2="166" stroke="#444"/><line x1="1322.5" y1="157" x2="1322.5" y2="166" stroke="#555"/><line x1="1329.5" y1="165" x2="1329.5" y2="166" stroke="#444"/><line x1="1336.5" y1="165" x2="1336.5" y2="166" stroke="#444"/><line x1="1342.5" y1="165" x2="1342.5" y2="166" stroke="#444"/><line x1="1349.5" y1="162.5" x2="1349.5" y2="166" stroke="#666"/><line x1="1356.5" y1="165" x2="1356.5" y2="166" stroke="#444"/><line x1="1363.5" y1="165" x2="1363.5" y2="166" stroke="#444"/><line x1="1369.5" y1="165" x2="1369.5" y2="166" stroke="#444"/><line x1="1376.5" y1="157" x2="1376.5" y2="166" stroke="#555"/><line x1="1383.5" y1="165" x2="1383.5" y2="166" stroke="#444"/><line x1="1389.5" y1="165" x2="1389.5" y2="166" stroke="#444"/><line x1="1396.5" y1="165" x2="1396.5" y2="166" stroke="#444"/><line x1="1403.5" y1="162.5" x2="1403.5" y2="166" stroke="#666"/><line x1="1410.5" y1="165" x2="1410.5" y2="166" stroke="#444"/><line x1="7.5" y1="170.5" x2="9" y2="170.5" stroke="#444"/><line x1="7.5" y1="177.5" x2="9" y2="177.5" stroke="#444"/><line x1="7.5" y1="183.5" x2="9" y2="183.5" stroke="#444"/><line x1="5" y1="190.5" x2="9" y2="190.5" stroke="#666"/><line x1="7.5" y1="197.5" x2="9" y2="197.5" stroke="#444"/><line x1="7.5" y1="203.5" x2="9" y2="203.5" stroke="#444"/><line x1="7.5" y1="210.5" x2="9" y2="210.5" stroke="#444"/><line x1="0" y1="217.5" x2="9" y2="217.5" stroke="#555"/><line x1="7.5" y1="224.5" x2="9" y2="224.5" stroke="#444"/><line x1="7.5" y1="230.5" x2="9" y2="230.5" stroke="#444"/><line x1="7.5" y1="237.5" x2="9" y2="237.5" stroke="#444"/><line x1="5" y1="244.5" x2="9" y2="244.5" stroke="#666"/><line x1="7.5" y1="250.5" x2="9" y2="250.5" stroke="#444"/><line x1="7.5" y1="257.5" x2="9" y2="257.5" stroke="#444"/><line x1="7.5" y1="264.5" x2="9" y2="264.5" stroke="#444"/><line x1="0" y1="270.5" x2="9" y2="270.5" stroke="#555"/><line x1="7.5" y1="277.5" x2="9" y2="277.5" stroke="#444"/><line x1="7.5" y1="284.5" x2="9" y2="284.5" stroke="#444"/><line x1="7.5" y1="291.5" x2="9" y2="291.5" stroke="#444"/><line x1="5" y1="297.5" x2="9" y2="297.5" stroke="#666"/><line x1="7.5" y1="304.5" x2="9" y2="304.5" stroke="#444"/><line x1="7.5" y1="311.5" x2="9" y2="311.5" stroke="#444"/><line x1="7.5" y1="317.5" x2="9" y2="317.5" stroke="#444"/><line x1="0" y1="324.5" x2="9" y2="324.5" stroke="#555"/><line x1="7.5" y1="331.5" x2="9" y2="331.5" stroke="#444"/><line x1="7.5" y1="338.5" x2="9" y2="338.5" stroke="#444"/><line x1="7.5" y1="344.5" x2="9" y2="344.5" stroke="#444"/><line x1="5" y1="351.5" x2="9" y2="351.5" stroke="#666"/><line x1="7.5" y1="358.5" x2="9" y2="358.5" stroke="#444"/><line x1="7.5" y1="364.5" x2="9" y2="364.5" stroke="#444"/><line x1="7.5" y1="371.5" x2="9" y2="371.5" stroke="#444"/><line x1="0" y1="378.5" x2="9" y2="378.5" stroke="#555"/><line x1="7.5" y1="384.5" x2="9" y2="384.5" stroke="#444"/><line x1="7.5" y1="391.5" x2="9" y2="391.5" stroke="#444"/><line x1="7.5" y1="398.5" x2="9" y2="398.5" stroke="#444"/><line x1="5" y1="405.5" x2="9" y2="405.5" stroke="#666"/><line x1="7.5" y1="411.5" x2="9" y2="411.5" stroke="#444"/><line x1="7.5" y1="418.5" x2="9" y2="418.5" stroke="#444"/><line x1="7.5" y1="425.5" x2="9" y2="425.5" stroke="#444"/><line x1="0" y1="431.5" x2="9" y2="431.5" stroke="#555"/><line x1="7.5" y1="438.5" x2="9" y2="438.5" stroke="#444"/><line x1="7.5" y1="445.5" x2="9" y2="445.5" stroke="#444"/><line x1="7.5" y1="452.5" x2="9" y2="452.5" stroke="#444"/><line x1="5" y1="458.5" x2="9" y2="458.5" stroke="#666"/><line x1="7.5" y1="465.5" x2="9" y2="465.5" stroke="#444"/><line x1="7.5" y1="472.5" x2="9" y2="472.5" stroke="#444"/><line x1="7.5" y1="478.5" x2="9" y2="478.5" stroke="#444"/><line x1="0" y1="485.5" x2="9" y2="485.5" stroke="#555"/><line x1="7.5" y1="492.5" x2="9" y2="492.5" stroke="#444"/><line x1="7.5" y1="498.5" x2="9" y2="498.5" stroke="#444"/><line x1="7.5" y1="505.5" x2="9" y2="505.5" stroke="#444"/><line x1="5" y1="512.5" x2="9" y2="512.5" stroke="#666"/><line x1="7.5" y1="519.5" x2="9" y2="519.5" stroke="#444"/><line x1="7.5" y1="525.5" x2="9" y2="525.5" stroke="#444"/><line x1="7.5" y1="532.5" x2="9" y2="532.5" stroke="#444"/><line x1="0" y1="539.5" x2="9" y2="539.5" stroke="#555"/><line x1="7.5" y1="545.5" x2="9" y2="545.5" stroke="#444"/><line x1="7.5" y1="552.5" x2="9" y2="552.5" stroke="#444"/><line x1="7.5" y1="559.5" x2="9" y2="559.5" stroke="#444"/><line x1="5" y1="566.5" x2="9" y2="566.5" stroke="#666"/><line x1="7.5" y1="572.5" x2="9" y2="572.5" stroke="#444"/><line x1="7.5" y1="579.5" x2="9" y2="579.5" stroke="#444"/><line x1="7.5" y1="586.5" x2="9" y2="586.5" stroke="#444"/><line x1="0" y1="592.5" x2="9" y2="592.5" stroke="#555"/><line x1="7.5" y1="599.5" x2="9" y2="599.5" stroke="#444"/><line x1="7.5" y1="606.5" x2="9" y2="606.5" stroke="#444"/><line x1="7.5" y1="612.5" x2="9" y2="612.5" stroke="#444"/><line x1="5" y1="619.5" x2="9" y2="619.5" stroke="#666"/><line x1="7.5" y1="626.5" x2="9" y2="626.5" stroke="#444"/><line x1="7.5" y1="633.5" x2="9" y2="633.5" stroke="#444"/><line x1="7.5" y1="639.5" x2="9" y2="639.5" stroke="#444"/><line x1="0" y1="646.5" x2="9" y2="646.5" stroke="#555"/><line x1="7.5" y1="653.5" x2="9" y2="653.5" stroke="#444"/><line x1="7.5" y1="659.5" x2="9" y2="659.5" stroke="#444"/><line x1="7.5" y1="666.5" x2="9" y2="666.5" stroke="#444"/><line x1="5" y1="673.5" x2="9" y2="673.5" stroke="#666"/><line x1="7.5" y1="680.5" x2="9" y2="680.5" stroke="#444"/><line x1="7.5" y1="686.5" x2="9" y2="686.5" stroke="#444"/><line x1="7.5" y1="693.5" x2="9" y2="693.5" stroke="#444"/><line x1="0" y1="700.5" x2="9" y2="700.5" stroke="#555"/><line x1="7.5" y1="706.5" x2="9" y2="706.5" stroke="#444"/><line x1="7.5" y1="713.5" x2="9" y2="713.5" stroke="#444"/><line x1="7.5" y1="720.5" x2="9" y2="720.5" stroke="#444"/><line x1="5" y1="726.5" x2="9" y2="726.5" stroke="#666"/><line x1="7.5" y1="733.5" x2="9" y2="733.5" stroke="#444"/><line x1="7.5" y1="740.5" x2="9" y2="740.5" stroke="#444"/></svg>
<div style="position:absolute;left:35px;top:157.25px;font-size:7.50px;line-height:7.50px;color:#222;white-space:nowrap;">-2</div>
<div style="position:absolute;left:89px;top:157.25px;font-size:7.50px;line-height:7.50px;color:#222;white-space:nowrap;">-1.5</div>
<div style="position:absolute;left:143px;top:157.25px;font-size:7.50px;line-height:7.50px;color:#222;white-space:nowrap;">-1</div>
<div style="position:absolute;left:196px;top:157.25px;font-size:7.50px;line-height:7.50px;color:#222;white-space:nowrap;">-0.5</div>
<div style="position:absolute;left:250px;top:157.25px;font-size:7.50px;line-height:7.50px;color:#222;white-space:nowrap;">0</div>
<div style="position:absolute;left:304px;top:157.25px;font-size:7.50px;line-height:7.50px;color:#222;white-space:nowrap;">0.5</div>
<div style="position:absolute;left:357px;top:157.25px;font-size:7.50px;line-height:7.50px;color:#222;white-space:nowrap;">1</div>
<div style="position:absolute;left:411px;top:157.25px;font-size:7.50px;line-height:7.50px;color:#222;white-space:nowrap;">1.5</div>
<div style="position:absolute;left:465px;top:157.25px;font-size:7.50px;line-height:7.50px;color:#222;white-space:nowrap;">2</div>
<div style="position:absolute;left:519px;top:157.25px;font-size:7.50px;line-height:7.50px;color:#222;white-space:nowrap;">2.5</div>
<div style="position:absolute;left:572px;top:157.25px;font-size:7.50px;line-height:7.50px;color:#222;white-space:nowrap;">3</div>
<div style="position:absolute;left:626px;top:157.25px;font-size:7.50px;line-height:7.50px;color:#222;white-space:nowrap;">3.5</div>
<div style="position:absolute;left:680px;top:157.25px;font-size:7.50px;line-height:7.50px;color:#222;white-space:nowrap;">4</div>
<div style="position:absolute;left:733px;top:157.25px;font-size:7.50px;line-height:7.50px;color:#222;white-space:nowrap;">4.5</div>
<div style="position:absolute;left:787px;top:157.25px;font-size:7.50px;line-height:7.50px;color:#222;white-space:nowrap;">5</div>
<div style="position:absolute;left:841px;top:157.25px;font-size:7.50px;line-height:7.50px;color:#222;white-space:nowrap;">5.5</div>
<div style="position:absolute;left:895px;top:157.25px;font-size:7.50px;line-height:7.50px;color:#222;white-space:nowrap;">6</div>
<div style="position:absolute;left:948px;top:157.25px;font-size:7.50px;line-height:7.50px;color:#222;white-space:nowrap;">6.5</div>
<div style="position:absolute;left:1002px;top:157.25px;font-size:7.50px;line-height:7.50px;color:#222;white-space:nowrap;">7</div>
<div style="position:absolute;left:1056px;top:157.25px;font-size:7.50px;line-height:7.50px;color:#222;white-space:nowrap;">7.5</div>
<div style="position:absolute;left:1109px;top:157.25px;font-size:7.50px;line-height:7.50px;color:#222;white-space:nowrap;">8</div>
<div style="position:absolute;left:1163px;top:157.25px;font-size:7.50px;line-height:7.50px;color:#222;white-space:nowrap;">8.5</div>
<div style="position:absolute;left:1217px;top:157.25px;font-size:7.50px;line-height:7.50px;color:#222;white-space:nowrap;">9</div>
<div style="position:absolute;left:1271px;top:157.25px;font-size:7.50px;line-height:7.50px;color:#222;white-space:nowrap;">9.5</div>
<div style="position:absolute;left:1324px;top:157.25px;font-size:7.50px;line-height:7.50px;color:#222;white-space:nowrap;">10</div>
<div style="position:absolute;left:1378px;top:157.25px;font-size:7.50px;line-height:7.50px;color:#222;white-space:nowrap;">10.5</div>
<div style="position:absolute;left:0px;top:215.5px;width:0;height:0;"><div style="position:absolute;left:1px;top:0;transform-origin:0 0;transform:rotate(-90deg);font-size:8.2px;line-height:8.2px;color:#333;white-space:nowrap">5</div></div>
<div style="position:absolute;left:0px;top:268.5px;width:0;height:0;"><div style="position:absolute;left:1px;top:0;transform-origin:0 0;transform:rotate(-90deg);font-size:8.2px;line-height:8.2px;color:#333;white-space:nowrap">5.5</div></div>
<div style="position:absolute;left:0px;top:322.5px;width:0;height:0;"><div style="position:absolute;left:1px;top:0;transform-origin:0 0;transform:rotate(-90deg);font-size:8.2px;line-height:8.2px;color:#333;white-space:nowrap">6</div></div>
<div style="position:absolute;left:0px;top:376.5px;width:0;height:0;"><div style="position:absolute;left:1px;top:0;transform-origin:0 0;transform:rotate(-90deg);font-size:8.2px;line-height:8.2px;color:#333;white-space:nowrap">6.5</div></div>
<div style="position:absolute;left:0px;top:429.5px;width:0;height:0;"><div style="position:absolute;left:1px;top:0;transform-origin:0 0;transform:rotate(-90deg);font-size:8.2px;line-height:8.2px;color:#333;white-space:nowrap">7</div></div>
<div style="position:absolute;left:0px;top:483.5px;width:0;height:0;"><div style="position:absolute;left:1px;top:0;transform-origin:0 0;transform:rotate(-90deg);font-size:8.2px;line-height:8.2px;color:#333;white-space:nowrap">7.5</div></div>
<div style="position:absolute;left:0px;top:537.5px;width:0;height:0;"><div style="position:absolute;left:1px;top:0;transform-origin:0 0;transform:rotate(-90deg);font-size:8.2px;line-height:8.2px;color:#333;white-space:nowrap">8</div></div>
<div style="position:absolute;left:0px;top:590.5px;width:0;height:0;"><div style="position:absolute;left:1px;top:0;transform-origin:0 0;transform:rotate(-90deg);font-size:8.2px;line-height:8.2px;color:#333;white-space:nowrap">8.5</div></div>
<div style="position:absolute;left:0px;top:644.5px;width:0;height:0;"><div style="position:absolute;left:1px;top:0;transform-origin:0 0;transform:rotate(-90deg);font-size:8.2px;line-height:8.2px;color:#333;white-space:nowrap">9</div></div>
<div style="position:absolute;left:0px;top:698.5px;width:0;height:0;"><div style="position:absolute;left:1px;top:0;transform-origin:0 0;transform:rotate(-90deg);font-size:8.2px;line-height:8.2px;color:#333;white-space:nowrap">9.5</div></div>
<div style="position:absolute;left:2px;top:159.42px;font-size:6.00px;line-height:6.00px;color:#555;white-space:nowrap;">in</div>
<div style="position:absolute;left:1397px;top:169px;width:16px;height:572px;background:#f0f0f0"></div>
<div style="position:absolute;left:1416px;top:156px;width:1px;height:600px;background:#7c7c7c"></div>
<div style="position:absolute;left:1417px;top:156px;width:1px;height:600px;background:#c0c0c0"></div>
<div style="position:absolute;left:1418px;top:156px;width:11px;height:600px;background:#f0f0f0"></div>
<div style="position:absolute;left:0px;top:741px;width:1415px;height:15px;background:#f0f0f0"></div>
<div style="position:absolute;left:0px;top:755px;width:1415px;height:1px;background:#d6d6d6"></div>
<div style="position:absolute;left:0px;top:756px;width:1429px;height:11px;background:#f0f0f0"></div>
<div style="position:absolute;left:356.8px;top:588.56px;font-family:'Liberation Serif',serif;font-size:38.5px;line-height:38.5px;color:#111;white-space:nowrap;transform:scaleX(1.0);transform-origin:0 0;-webkit-text-stroke:0.4px #111;">A</div>
<div style="position:absolute;left:449.3px;top:588.56px;font-family:'Liberation Serif',serif;font-size:38.5px;line-height:38.5px;color:#111;white-space:nowrap;transform:scaleX(1.055);transform-origin:0 0;-webkit-text-stroke:0.4px #111;">2Bh</div>
<div style="position:absolute;left:573.5px;top:588.56px;font-family:'Liberation Serif',serif;font-size:38.5px;line-height:38.5px;color:#111;white-space:nowrap;transform:scaleX(1.07);transform-origin:0 0;-webkit-text-stroke:0.4px #111;">Hb</div>
<div style="position:absolute;left:405px;top:604.5px;width:24.5px;height:3px;background:#111"></div>
<div style="position:absolute;left:405px;top:612.9px;width:24.5px;height:3px;background:#111"></div>
<div style="position:absolute;left:538.2px;top:609px;width:24.8px;height:2.8px;background:#111"></div>
<div style="position:absolute;left:549.2px;top:597.8px;width:2.8px;height:24.8px;background:#111"></div>
<div style="position:absolute;left:4.7px;top:62.20px;font-size:8.74px;line-height:8.74px;color:#111;white-space:nowrap;transform:scaleX(0.8696);transform-origin:0 0;">Paper:</div>
<div style="position:absolute;left:33.5px;top:60.5px;width:80.0px;height:14.0px;background:#fff;border:1px solid #dcdcdc;border-radius:2px;box-shadow:0 1px 0 #e8e8e8"></div>
<div style="position:absolute;left:37.5px;top:62.70px;font-size:8.74px;line-height:8.74px;color:#111;white-space:nowrap;transform:scaleX(0.8696);transform-origin:0 0;">Letter</div>
<svg style="left:104.5px;top:65.5px" width="7" height="4"><path d="M0,0 L6,0 L3,3.5Z" fill="#111"/></svg>
<svg style="left:125px;top:64px" width="11" height="6"><path d="M0.5,2.5 L10.5,2.5 M0.5,2.5 L2.8,0.5 M0.5,2.5 L2.8,4.5 M10.5,2.5 L8.2,0.5 M10.5,2.5 L8.2,4.5" stroke="#333" stroke-width="0.9" fill="none"/></svg>
<svg style="left:127px;top:80px" width="6" height="11"><path d="M3,0.5 L3,10.5 M3,0.5 L1,2.8 M3,0.5 L5,2.8 M3,10.5 L1,8.2 M3,10.5 L5,8.2" stroke="#333" stroke-width="0.9" fill="none"/></svg>
<div style="position:absolute;left:138px;top:59.5px;width:59px;height:15px;background:#fff;border:1px solid #e4e4e4;border-bottom:1px solid #b8b8b8"></div>
<div style="position:absolute;left:139.5px;top:62.20px;font-size:8.74px;line-height:8.74px;color:#111;white-space:nowrap;transform:scaleX(0.8696);transform-origin:0 0;">8.500 in</div>
<div style="position:absolute;left:138px;top:78.5px;width:59px;height:15px;background:#fff;border:1px solid #e4e4e4;border-bottom:1px solid #b8b8b8"></div>
<div style="position:absolute;left:139.5px;top:80.90px;font-size:8.74px;line-height:8.74px;color:#111;white-space:nowrap;transform:scaleX(0.8696);transform-origin:0 0;">11.000 in</div>
<div style="position:absolute;left:4.5px;top:81.5px;width:9px;height:9px;background:#fafafa;border:1px solid #e2e2e2;border-radius:2px"></div>
<div style="position:absolute;left:16px;top:81.80px;font-size:8.74px;line-height:8.74px;color:#a0a0a0;white-space:nowrap;transform:scaleX(0.8696);transform-origin:0 0;">Apply to all pages</div>
<svg style="left:204px;top:70px" width="11" height="13"><path d="M0.5,0.5 L7,0.5 L10.5,4 L10.5,12.5 L0.5,12.5Z" fill="#fff" stroke="#444"/><path d="M7,0.5 L7,4 L10.5,4" fill="none" stroke="#444"/><circle cx="5" cy="8" r="2.3" fill="none" stroke="#2f7fd8" stroke-width="1"/><path d="M6,5.6 L8,6.6" stroke="#e8772e"/></svg>
<div style="position:absolute;left:224px;top:57px;width:1px;height:38px;background:#d8d8d8"></div>
<div style="position:absolute;left:231px;top:62.20px;font-size:8.74px;line-height:8.74px;color:#111;white-space:nowrap;transform:scaleX(0.8696);transform-origin:0 0;">Units:</div>
<div style="position:absolute;left:231.5px;top:78.8px;width:80.0px;height:13.700000000000003px;background:#fff;border:1px solid #dcdcdc;border-radius:2px;box-shadow:0 1px 0 #e8e8e8"></div>
<div style="position:absolute;left:235.5px;top:81.26px;font-size:8.67px;line-height:8.67px;color:#111;white-space:nowrap;transform:scaleX(0.8696);transform-origin:0 0;">inches</div>
<svg style="left:302.5px;top:83.65px" width="7" height="4"><path d="M0,0 L6,0 L3,3.5Z" fill="#111"/></svg>
<div style="position:absolute;left:322px;top:62.20px;font-size:8.74px;line-height:8.74px;color:#111;white-space:nowrap;transform:scaleX(0.8696);transform-origin:0 0;">Drawing scale:</div>
<div style="position:absolute;left:322px;top:80.80px;font-size:8.74px;line-height:8.74px;color:#111;white-space:nowrap;transform:scaleX(0.8696);transform-origin:0 0;">Number format:</div>
<div style="position:absolute;left:383px;top:60.5px;width:102.5px;height:14.0px;background:#fff;border:1px solid #dcdcdc;border-radius:2px;box-shadow:0 1px 0 #e8e8e8"></div>
<div style="position:absolute;left:389.6px;top:63.03px;font-size:9.18px;line-height:9.18px;color:#111;white-space:nowrap;transform:scaleX(0.8696);transform-origin:0 0;">1" = 1"&nbsp; (Full Size)</div>
<svg style="left:476.5px;top:65.5px" width="7" height="4"><path d="M0,0 L6,0 L3,3.5Z" fill="#111"/></svg>
<div style="position:absolute;left:383px;top:78.5px;width:102.5px;height:14.0px;background:#fff;border:1px solid #dcdcdc;border-radius:2px;box-shadow:0 1px 0 #e8e8e8"></div>
<div style="position:absolute;left:387px;top:81.52px;font-size:8.37px;line-height:8.37px;color:#111;white-space:nowrap;transform:scaleX(0.8696);transform-origin:0 0;">N.xx3</div>
<svg style="left:476.5px;top:83.5px" width="7" height="4"><path d="M0,0 L6,0 L3,3.5Z" fill="#111"/></svg>
<div style="position:absolute;left:497px;top:62.20px;font-size:8.74px;line-height:8.74px;color:#111;white-space:nowrap;transform:scaleX(0.8696);transform-origin:0 0;">Coordinates:</div>
<div style="position:absolute;left:497.5px;top:78.5px;width:102.0px;height:14.0px;background:#fff;border:1px solid #dcdcdc;border-radius:2px;box-shadow:0 1px 0 #e8e8e8"></div>
<div style="position:absolute;left:500.8px;top:80.67px;font-size:9.37px;line-height:9.37px;color:#111;white-space:nowrap;transform:scaleX(0.8696);transform-origin:0 0;">X(+): right, Y(+): down</div>
<svg style="left:590.5px;top:83.5px" width="7" height="4"><path d="M0,0 L6,0 L3,3.5Z" fill="#111"/></svg>
<div style="position:absolute;left:607px;top:57px;width:1px;height:38px;background:#d8d8d8"></div>
<div style="position:absolute;left:614px;top:63px;width:9px;height:9px;background:#1565c0;border-radius:2px"></div>
<svg style="left:614px;top:63px" width="9" height="9"><path d="M2.2,4.6 L3.8,6.2 L6.8,2.8" stroke="#fff" stroke-width="0.9" fill="none"/></svg>
<div style="position:absolute;left:625.6px;top:62.80px;font-size:8.74px;line-height:8.74px;color:#111;white-space:nowrap;transform:scaleX(0.8696);transform-origin:0 0;">Grids</div>
<div style="position:absolute;left:614px;top:82px;width:9px;height:9px;background:#fafafa;border:1px solid #9a9a9a;border-radius:2px"></div>
<div style="position:absolute;left:625.6px;top:81.80px;font-size:8.74px;line-height:8.74px;color:#111;white-space:nowrap;transform:scaleX(0.8696);transform-origin:0 0;">Guides</div>
<svg style="left:662px;top:61px" width="12" height="12"><rect x="1" y="1" width="10" height="6" fill="#2f6fd0"/><path d="M0,2H12M0,4H12M0,6H12M0,8H12M0,10H12" stroke="#6a7aa8" stroke-width="0.6"/><circle cx="6" cy="8.5" r="2.6" fill="#f07a2a"/></svg>
<svg style="left:662px;top:80px" width="12" height="13"><rect x="1" y="0.5" width="1.3" height="12" fill="#6070a0"/><rect x="2" y="1" width="9" height="5.5" fill="#2f6fd0"/><circle cx="4.5" cy="9.5" r="2.5" fill="#f07a2a"/></svg>
<div style="position:absolute;left:686px;top:63px;width:9px;height:9px;background:#1565c0;border-radius:2px"></div>
<svg style="left:686px;top:63px" width="9" height="9"><path d="M2.2,4.6 L3.8,6.2 L6.8,2.8" stroke="#fff" stroke-width="0.9" fill="none"/></svg>
<div style="position:absolute;left:697.8px;top:62.80px;font-size:8.74px;line-height:8.74px;color:#111;white-space:nowrap;transform:scaleX(0.8696);transform-origin:0 0;">Smart Snaps</div>
<div style="position:absolute;left:687px;top:77.7px;width:52px;height:15.6px;background:#fafafa;border:1px solid #dcdcdc;border-radius:2px"></div>
<div style="position:absolute;left:695.6px;top:81.80px;font-size:8.74px;line-height:8.74px;color:#111;white-space:nowrap;transform:scaleX(0.8696);transform-origin:0 0;">Settings...</div>
<div style="position:absolute;left:746px;top:57px;width:1px;height:38px;background:#d8d8d8"></div>
<div style="position:absolute;left:753px;top:63px;width:9px;height:9px;background:#1565c0;border-radius:2px"></div>
<svg style="left:753px;top:63px" width="9" height="9"><path d="M2.2,4.6 L3.8,6.2 L6.8,2.8" stroke="#fff" stroke-width="0.9" fill="none"/></svg>
<div style="position:absolute;left:764.5px;top:62.80px;font-size:8.74px;line-height:8.74px;color:#111;white-space:nowrap;transform:scaleX(0.8696);transform-origin:0 0;">Rulers</div>
<div style="position:absolute;left:753px;top:81.5px;width:9px;height:9px;background:#fafafa;border:1px solid #9a9a9a;border-radius:2px"></div>
<div style="position:absolute;left:764.5px;top:81.80px;font-size:8.74px;line-height:8.74px;color:#111;white-space:nowrap;transform:scaleX(0.8696);transform-origin:0 0;">Breaks</div>
<div style="position:absolute;left:807.5px;top:63px;width:9px;height:9px;background:#fafafa;border:1px solid #e2e2e2;border-radius:2px"></div>
<div style="position:absolute;left:818.7px;top:62.80px;font-size:8.74px;line-height:8.74px;color:#a8a8a8;white-space:nowrap;transform:scaleX(0.8696);transform-origin:0 0;">Margins</div>
<div style="position:absolute;left:807.5px;top:81.5px;width:9px;height:9px;background:#fafafa;border:1px solid #e2e2e2;border-radius:2px"></div>
<div style="position:absolute;left:818.7px;top:81.80px;font-size:8.74px;line-height:8.74px;color:#a8a8a8;white-space:nowrap;transform:scaleX(0.8696);transform-origin:0 0;">Print area</div>
<div style="position:absolute;left:865px;top:63px;width:9px;height:9px;background:#fafafa;border:1px solid #9a9a9a;border-radius:2px"></div>
<div style="position:absolute;left:876.7px;top:62.80px;font-size:8.74px;line-height:8.74px;color:#111;white-space:nowrap;transform:scaleX(0.8696);transform-origin:0 0;">Text boxes</div>
<div style="position:absolute;left:865px;top:81.5px;width:9px;height:9px;background:#1565c0;border-radius:2px"></div>
<svg style="left:865px;top:81.5px" width="9" height="9"><path d="M2.2,4.6 L3.8,6.2 L6.8,2.8" stroke="#fff" stroke-width="0.9" fill="none"/></svg>
<div style="position:absolute;left:876.7px;top:81.80px;font-size:8.74px;line-height:8.74px;color:#111;white-space:nowrap;transform:scaleX(0.8696);transform-origin:0 0;">Spelling errors</div>
<div style="position:absolute;left:926px;top:63px;width:9px;height:9px;background:#fafafa;border:1px solid #9a9a9a;border-radius:2px"></div>
<div style="position:absolute;left:938px;top:62.80px;font-size:8.74px;line-height:8.74px;color:#111;white-space:nowrap;transform:scaleX(0.8696);transform-origin:0 0;">Trim View</div>
<div style="position:absolute;left:982px;top:57px;width:1px;height:38px;background:#d8d8d8"></div>
<div style="position:absolute;left:989.3px;top:71.5px;width:9px;height:9px;background:#fafafa;border:1px solid #9a9a9a;border-radius:2px"></div>
<div style="position:absolute;left:1000.7px;top:72.20px;font-size:8.74px;line-height:8.74px;color:#111;white-space:nowrap;transform:scaleX(0.8696);transform-origin:0 0;">Select Across layers</div>
<div style="position:absolute;left:4px;top:101.65px;font-size:8.92px;line-height:8.92px;color:#111;white-space:nowrap;transform:scaleX(0.8696);transform-origin:0 0;">Selection tool or Direct Group Selection tool. Use the Selection tool to select an object or objects. To select multiple objects, Shift-click each object. To place an object in Edit mode, double-click the object with the Selection tool. To place multiple objects into Edit mode, Shift and double-click each object. Use the Direct Group Selection tool to select individual objects within a group without needing to</div>
<div style="position:absolute;left:4px;top:111.03px;font-size:8.94px;line-height:8.94px;color:#111;white-space:nowrap;transform:scaleX(0.8696);transform-origin:0 0;">ungroup the objects by dragging your cursor over them.</div>
<div style="position:absolute;left:1398px;top:101px;width:12px;height:36px;background:#f0f0f0"></div>
<svg style="left:1400px;top:104px" width="8" height="5"><path d="M0.5,4.5 L4,0.5 L7.5,4.5Z" fill="#c4c4c4"/></svg>
<svg style="left:1400px;top:128px" width="8" height="5"><path d="M0.5,0.5 L4,4.5 L7.5,0.5Z" fill="#a8a8a8"/></svg>
<div style="position:absolute;left:1417px;top:102.43px;font-size:9.18px;line-height:9.18px;color:#444;white-space:nowrap;transform:scaleX(0.8929);transform-origin:0 0;-webkit-text-stroke:0.3px #444;">X</div>
<div style="position:absolute;left:0px;top:143px;width:44.6px;height:13px;background:#f0f0f0;border-right:1px solid #e2e2e2"></div>
<div style="position:absolute;left:3.8px;top:144.90px;font-size:8.74px;line-height:8.74px;color:#333;white-space:nowrap;transform:scaleX(0.8696);transform-origin:0 0;">Brushes</div>
<div style="position:absolute;left:44.6px;top:143px;width:41.6px;height:13px;background:#f0f0f0;border-right:1px solid #e2e2e2"></div>
<div style="position:absolute;left:49.5px;top:144.90px;font-size:8.74px;line-height:8.74px;color:#333;white-space:nowrap;transform:scaleX(0.8696);transform-origin:0 0;">Type</div>
<div style="position:absolute;left:86.2px;top:143px;width:68.49999999999999px;height:13px;background:#f0f0f0;border-right:1px solid #e2e2e2"></div>
<div style="position:absolute;left:90.7px;top:144.90px;font-size:8.74px;line-height:8.74px;color:#333;white-space:nowrap;transform:scaleX(0.8696);transform-origin:0 0;">SpriteEffects</div>
<div style="position:absolute;left:154.7px;top:143px;width:58.80000000000001px;height:13px;background:#f0f0f0;border-right:1px solid #e2e2e2"></div>
<div style="position:absolute;left:159.6px;top:144.90px;font-size:8.74px;line-height:8.74px;color:#333;white-space:nowrap;transform:scaleX(0.8696);transform-origin:0 0;">Navigator</div>
<div style="position:absolute;left:264px;top:143px;width:102.30000000000001px;height:13px;background:#f0f0f0;border-right:1px solid #e2e2e2"></div>
<div style="position:absolute;left:267.7px;top:144.90px;font-size:8.74px;line-height:8.74px;color:#333;white-space:nowrap;transform:scaleX(0.8696);transform-origin:0 0;">Smart Mouse &amp; Guides</div>
<div style="position:absolute;left:366.3px;top:143px;width:40.0px;height:13px;background:#f0f0f0;border-right:1px solid #e2e2e2"></div>
<div style="position:absolute;left:370.5px;top:144.90px;font-size:8.74px;line-height:8.74px;color:#333;white-space:nowrap;transform:scaleX(0.8696);transform-origin:0 0;">Align</div>
<svg style="left:3px;top:744px" width="9" height="9"><circle cx="3.8" cy="3.8" r="2.8" fill="none" stroke="#777" stroke-width="1"/><path d="M5.8,5.8 L8.5,8.5" stroke="#777" stroke-width="1.3"/></svg>
<div style="position:absolute;left:13.7px;top:743px;width:55.6px;height:11.3px;background:#fff;border:1px solid #cfcfcf"></div>
<div style="position:absolute;left:17.4px;top:744.90px;font-size:8.74px;line-height:8.74px;color:#111;white-space:nowrap;transform:scaleX(0.8696);transform-origin:0 0;">200.0%</div>
<svg style="left:60px;top:745.5px" width="7" height="5"><path d="M0.5,0.5 L3.5,3.5 L6.5,0.5" fill="none" stroke="#777" stroke-width="0.8"/></svg>
<svg style="left:72px;top:744px" width="9" height="9"><circle cx="3.8" cy="3.8" r="2.8" fill="none" stroke="#777" stroke-width="1"/><path d="M5.8,5.8 L8.5,8.5" stroke="#777" stroke-width="1.3"/><path d="M2.3,3.8H5.3" stroke="#777" stroke-width="0.8"/></svg>
<div style="position:absolute;left:84px;top:742px;width:1px;height:13px;background:#d0d0d0"></div>
<svg style="left:87px;top:743px" width="8" height="11"><path d="M0.5,0.5 L5,0.5 L7.5,3 L7.5,10.5 L0.5,10.5Z" fill="#fff" stroke="#555"/></svg>
<svg style="left:99px;top:745px" width="9" height="7"><path d="M4,0 L0,3.5 L4,7Z M8.5,0 L4.5,3.5 L8.5,7Z" fill="#666"/></svg>
<svg style="left:111px;top:745px" width="9" height="7"><path d="M0.5,0 L4.5,3.5 L0.5,7Z M5,0 L9,3.5 L5,7Z" fill="#666"/></svg>
<div style="position:absolute;left:121.5px;top:742.5px;width:57px;height:12px;background:#fff;border:1px solid #cfcfcf"></div>
<div style="position:absolute;left:124.6px;top:744.90px;font-size:8.74px;line-height:8.74px;color:#111;white-space:nowrap;transform:scaleX(0.8696);transform-origin:0 0;">Sheet #1</div>
<svg style="left:169px;top:745.5px" width="7" height="5"><path d="M0.5,0.5 L3.5,3.5 L6.5,0.5" fill="none" stroke="#777" stroke-width="0.8"/></svg>
<div style="position:absolute;left:181px;top:742px;width:1px;height:13px;background:#d0d0d0"></div>
<svg style="left:183px;top:743px" width="10" height="11"><rect x="0.5" y="0.5" width="6" height="7" fill="#f4f4f4" stroke="#888"/><rect x="3.5" y="3.5" width="6" height="7" fill="#f4f4f4" stroke="#888"/></svg>
<svg style="left:197px;top:744.5px" width="7" height="8"><rect x="0" y="0" width="1.5" height="8" fill="#555"/><path d="M7,0 L2,4 L7,8Z" fill="#555"/></svg>
<svg style="left:209px;top:744.5px" width="6" height="8"><path d="M5.5,0 L0.5,4 L5.5,8Z" fill="#555"/></svg>
<svg style="left:221px;top:744.5px" width="6" height="8"><path d="M0.5,0 L5.5,4 L0.5,8Z" fill="#555"/></svg>
<svg style="left:233px;top:744.5px" width="7" height="8"><path d="M0,0 L5,4 L0,8Z" fill="#555"/><rect x="5.5" y="0" width="1.5" height="8" fill="#555"/></svg>
<svg style="left:240px;top:741px" width="60" height="12"><path d="M1,0 L8,10.5 L57,10.5 L57,0" fill="#fff" stroke="#bdbdbd" stroke-width="1"/></svg>
<div style="position:absolute;left:252.8px;top:743.10px;font-size:8.74px;line-height:8.74px;color:#111;white-space:nowrap;transform:scaleX(0.8696);transform-origin:0 0;">Layer #1</div>
<div style="position:absolute;left:376px;top:742px;width:1px;height:13px;background:#c8c8c8"></div>
<div style="position:absolute;left:379px;top:742px;width:1px;height:13px;background:#d8d8d8"></div>
<div style="position:absolute;left:702px;top:747.5px;width:370px;height:3px;background:#8a8a8a;border-radius:1px"></div>
<svg style="left:1402px;top:746px" width="10" height="10"><path d="M9.5,1 L1,9.5 M9.5,4.5 L4.5,9.5 M9.5,8 L8,9.5" stroke="#999" stroke-width="0.9"/></svg>
<div style="position:absolute;left:0px;top:756px;width:1429px;height:1px;background:#dadada"></div>
<div style="position:absolute;left:239.5px;top:757px;width:1px;height:10px;background:#c8c8c8"></div>
<div style="position:absolute;left:478px;top:757px;width:1px;height:10px;background:#c8c8c8"></div>
<div style="position:absolute;left:715.7px;top:757px;width:1px;height:10px;background:#c8c8c8"></div>
<div style="position:absolute;left:955px;top:757px;width:1px;height:10px;background:#c8c8c8"></div>
<div style="position:absolute;left:1194px;top:757px;width:1px;height:10px;background:#c8c8c8"></div>
<div style="position:absolute;left:241px;top:758.06px;font-size:9.14px;line-height:9.14px;color:#111;white-space:nowrap;transform:scaleX(0.8696);transform-origin:0 0;">X: -0.619 in Y: 4.433 in</div>
<div style="position:absolute;left:718.8px;top:758.59px;font-size:8.52px;line-height:8.52px;color:#111;white-space:nowrap;transform:scaleX(0.8696);transform-origin:0 0;">No Selection</div>
<div style="position:absolute;left:1196.5px;top:758.41px;font-size:8.73px;line-height:8.73px;color:#111;white-space:nowrap;transform:scaleX(0.8696);transform-origin:0 0;">No image edit data</div>
<div style="position:absolute;left:1418px;top:163.5px;width:0;height:0"><div style="position:absolute;left:10px;top:0;transform-origin:0 0;transform:rotate(90deg);font-size:9.5px;line-height:10px;color:#222;white-space:nowrap">Canvas Assistant</div></div>
<div style="position:absolute;left:1417px;top:241px;width:12px;height:1px;background:#dcdcdc"></div>
<div style="position:absolute;left:1418px;top:251.7px;width:0;height:0"><div style="position:absolute;left:10px;top:0;transform-origin:0 0;transform:rotate(90deg);font-size:9.5px;line-height:10px;color:#222;white-space:nowrap">Document Layout</div></div>
<div style="position:absolute;left:1417px;top:334px;width:12px;height:1px;background:#dcdcdc"></div>
<div style="position:absolute;left:1418px;top:342.3px;width:0;height:0"><div style="position:absolute;left:10px;top:0;transform-origin:0 0;transform:rotate(90deg);font-size:9.5px;line-height:10px;color:#222;white-space:nowrap">Page Navigator</div></div>
<div style="position:absolute;left:1417px;top:416px;width:12px;height:1px;background:#dcdcdc"></div>
<div style="position:absolute;left:1418px;top:424px;width:0;height:0"><div style="position:absolute;left:10px;top:0;transform-origin:0 0;transform:rotate(90deg);font-size:9.5px;line-height:10px;color:#222;white-space:nowrap">Flowchart</div></div>
<div style="position:absolute;left:1417px;top:472px;width:12px;height:1px;background:#dcdcdc"></div>
<div style="position:absolute;left:1418px;top:479px;width:0;height:0"><div style="position:absolute;left:10px;top:0;transform-origin:0 0;transform:rotate(90deg);font-size:9.5px;line-height:10px;color:#222;white-space:nowrap">Symbol Library</div></div>
<div style="position:absolute;left:1417px;top:553px;width:12px;height:1px;background:#dcdcdc"></div>
<div style="position:absolute;left:1403px;top:432px;width:3px;height:131px;background:#8a8a8a"></div>
<div style="position:absolute;left:1412px;top:438px;width:5px;height:35px;background:#f8f8f8;border:1px solid #dadada;border-right:none"></div>
<div style="position:absolute;left:1172px;top:191.3px;width:48.5px;height:142.2px;background:#f0f0f0;border:1px solid #5a5a5a;border-top:1px solid #7a8ea8;border-left:1px solid #8a8a8a"></div>
<div style="position:absolute;left:1173px;top:192.3px;width:46.5px;height:18.5px;background:linear-gradient(#cfdff0,#a9c3e2)"></div>
<div style="position:absolute;left:1173px;top:210.3px;width:1.2px;height:122.19999999999999px;background:#9cc2e6"></div>
<div style="position:absolute;left:1218.0px;top:210.3px;width:1.5px;height:122.19999999999999px;background:#9cc2e6"></div>
<div style="position:absolute;left:1173px;top:331.0px;width:46.5px;height:1.5px;background:#9cc2e6"></div>
<div style="position:absolute;left:1208.0px;top:198.3px;width:8.3px;height:7.3px;background:#d9484a"></div>
<svg style="left:1209.5px;top:199.8px" width="5" height="5"><path d="M0.8,0.8 L4.2,4.2 M4.2,0.8 L0.8,4.2" stroke="#fff" stroke-width="0.9"/></svg>
<svg style="left:1198.5px;top:197.3px" width="9" height="9"><rect x="0.5" y="4" width="6" height="4.5" fill="#444"/><path d="M4.5,4 V2.5 Q6.5,0 8.5,2.5 V3.5" fill="none" stroke="#444" stroke-width="1.1"/></svg>
<div style="position:absolute;left:1220.5px;top:191.3px;width:48.299999999999955px;height:323.3px;background:#f0f0f0;border:1px solid #5a5a5a;border-top:1px solid #7a8ea8;border-left:1px solid #8a8a8a"></div>
<div style="position:absolute;left:1221.5px;top:192.3px;width:46.299999999999955px;height:18.5px;background:linear-gradient(#cfdff0,#a9c3e2)"></div>
<div style="position:absolute;left:1221.5px;top:210.3px;width:1.2px;height:303.3px;background:#9cc2e6"></div>
<div style="position:absolute;left:1266.3px;top:210.3px;width:1.5px;height:303.3px;background:#9cc2e6"></div>
<div style="position:absolute;left:1221.5px;top:512.1px;width:46.299999999999955px;height:1.5px;background:#9cc2e6"></div>
<div style="position:absolute;left:1256.3px;top:198.3px;width:8.3px;height:7.3px;background:#d9484a"></div>
<svg style="left:1257.8px;top:199.8px" width="5" height="5"><path d="M0.8,0.8 L4.2,4.2 M4.2,0.8 L0.8,4.2" stroke="#fff" stroke-width="0.9"/></svg>
<svg style="left:1179.5px;top:216.2px" width="14" height="14"><path d="M1.7,6.3 L7.5,1.3 M9.5,12.6 L14.2,7.9" stroke="#505050" stroke-width="0.9"/><path d="M5.5,4.2 L11,9.8" stroke="#5aa6e8" stroke-width="1"/><circle cx="5.5" cy="4.2" r="1.1" fill="#5aa6e8"/><circle cx="10.8" cy="9.8" r="1.4" fill="#2a7ad0"/></svg>
<svg style="left:1198.7px;top:216.2px" width="14" height="14"><path d="M1.7,5.5 L7,0.8 M5,9.5 L10,5 M8.5,13 L13.5,8.5" stroke="#505050" stroke-width="0.9"/><path d="M4.5,3 L11,10" stroke="#5aa6e8" stroke-width="1"/><circle cx="8" cy="6.8" r="1" fill="#5aa6e8"/><circle cx="11" cy="10" r="1.1" fill="#5aa6e8"/></svg>
<svg style="left:1179.5px;top:235.3px" width="14" height="14"><path d="M1.5,6.5 L6.5,1.5 M8.5,13 L13.5,8" stroke="#505050" stroke-width="0.9"/><path d="M3,5.5 L6,2.5 L11,8.5 L8,11.5Z" fill="none" stroke="#5aa6e8" stroke-width="0.9"/><circle cx="3.3" cy="5.8" r="1" fill="#5aa6e8"/><circle cx="5.3" cy="8" r="1.2" fill="#2a6ac0"/><circle cx="9.8" cy="10" r="1.1" fill="#5aa6e8"/></svg>
<svg style="left:1198.7px;top:235.3px" width="14" height="14"><path d="M7,1 L12,5.5 M1,7 L5.5,11.5" stroke="#505050" stroke-width="0.9"/><path d="M9.5,3.5 L3.5,9.5" stroke="#5aa6e8" stroke-width="1"/><circle cx="9.5" cy="3.5" r="1.3" fill="#5aa6e8"/><circle cx="4" cy="9" r="1.2" fill="none" stroke="#5aa6e8" stroke-width="0.8"/></svg>
<svg style="left:1179.5px;top:254.89999999999998px" width="14" height="14"><rect x="1" y="1" width="7.5" height="12" fill="#3d8fe0"/><rect x="10.2" y="1" width="1.6" height="12" fill="#999"/><path d="M9.5,1 H12.5 M9.5,13 H12.5" stroke="#333" stroke-width="0.9"/></svg>
<svg style="left:1198.7px;top:254.89999999999998px" width="14" height="14"><path d="M1,12 H12 M1,12 L6.5,2" fill="none" stroke="#444" stroke-width="0.8"/><path d="M1,12 H12" stroke="#aaa" stroke-width="1"/><circle cx="6.5" cy="2.3" r="0.9" fill="#5aa6e8"/><circle cx="11" cy="11.5" r="0.9" fill="#5aa6e8"/><text x="7" y="8.5" font-size="5.5" fill="#444" font-family="Liberation Sans">60</text></svg>
<svg style="left:1179.5px;top:273.9px" width="14" height="14"><circle cx="8.3" cy="7.5" r="5" fill="#3a8ee0"/><path d="M6.5,5.5 L9.5,8.5" stroke="#fff" stroke-width="1"/><path d="M6,5 L8,5.3 L6.3,7Z" fill="#fff"/><text x="0.5" y="5.5" font-size="5" fill="#222" font-family="Liberation Sans">1</text></svg>
<svg style="left:1198.7px;top:273.9px" width="14" height="14"><circle cx="8.3" cy="7.5" r="5" fill="#3a8ee0"/><path d="M6.5,5.5 L10.5,9.5" stroke="#fff" stroke-width="1"/><path d="M6,5 L8,5.3 L6.3,7Z M11,10 L9,9.7 L10.7,8Z" fill="#fff"/><text x="0.5" y="5.5" font-size="5" fill="#222" font-family="Liberation Sans">1</text></svg>
<svg style="left:1179.5px;top:293.1px" width="14" height="14"><circle cx="7" cy="7" r="5.8" fill="#3a8ee0"/><path d="M1.5,1.5 L12.5,12.5 M12.5,1.5 L1.5,12.5" stroke="#888" stroke-width="1"/></svg>
<svg style="left:1198.7px;top:293.1px" width="14" height="14"><rect x="1" y="1" width="12" height="12" fill="#3a8ee0"/><path d="M7,1.8 L12.2,7 L7,12.2 L1.8,7Z" fill="#fff"/><rect x="4.5" y="4.5" width="5" height="5" fill="none" stroke="#333" stroke-width="0.8" stroke-dasharray="1.5 1.5"/></svg>
<svg style="left:1179.5px;top:312px" width="14" height="14"><rect x="2" y="2" width="10" height="10" fill="none" stroke="#333" stroke-width="0.9" stroke-dasharray="1.2 1.3"/><rect x="4.5" y="4.5" width="5" height="5" fill="#3a8ee0"/></svg>
<div style="position:absolute;left:1225.3px;top:214.4px;width:19.6px;height:18.2px;background:#dcebfb;border:1px solid #b9d7f5;border-radius:2px"></div>
<svg style="left:1228px;top:216.2px" width="14" height="14"><path d="M4.5,2.5 L4.5,11 L6.5,9 L8.5,12.5 L9.5,12 L7.8,8.5 L10.5,8.5Z" fill="#222"/></svg>
<div style="position:absolute;left:1248px;top:216px;font-family:'Liberation Serif',serif;font-size:16px;line-height:16px;color:#3a3a3a">T</div>
<svg style="left:1228px;top:235.3px" width="14" height="14"><rect x="1" y="4" width="12" height="6" fill="#2f86d8"/></svg>
<svg style="left:1247px;top:235.3px" width="14" height="14"><path d="M2,2 L12,12" stroke="#333" stroke-width="1.1"/></svg>
<svg style="left:1228px;top:254.5px" width="14" height="14"><ellipse cx="7" cy="7" rx="6" ry="3.8" fill="#2f86d8"/></svg>
<svg style="left:1247px;top:254.5px" width="14" height="14"><path d="M2,12 Q3,5 9,3 L12,6 Q10,11 2,12Z" fill="#f0b43c" stroke="#8a5a10" stroke-width="0.6"/><circle cx="11" cy="3" r="2" fill="#c03030"/></svg>
<svg style="left:1228px;top:274px" width="14" height="14"><rect x="1" y="1" width="11" height="11" fill="none" stroke="#333" stroke-width="0.8" stroke-dasharray="1.5 1"/><path d="M3,10 Q4,6 8,5 L10,7 Q9,10 3,10Z" fill="#e08a40"/><path d="M8,6 L13,1" stroke="#2a5ab0" stroke-width="1.2"/></svg>
<svg style="left:1247px;top:274px" width="14" height="14"><path d="M2,12 Q3,8 6,8 L7,9 Q6,12 2,12Z" fill="#e08a40"/><path d="M6.5,8.5 L12.5,2" stroke="#2a6ac0" stroke-width="1.6"/></svg>
<svg style="left:1228px;top:293px" width="14" height="14"><path d="M2,12 L8,6" stroke="#777" stroke-width="1.3"/><path d="M7,5 L10,2 L12,4 L9,7Z" fill="#c8962e"/></svg>
<svg style="left:1247px;top:293px" width="14" height="14"><path d="M2,11 L8,5" stroke="#aaa" stroke-width="1.3"/><path d="M7,4 L10,1 L12,3 L9,6Z" fill="#c8962e"/><path d="M2,12 H13" stroke="#f0a070" stroke-width="1"/></svg>
<svg style="left:1228px;top:312px" width="14" height="14"><path d="M1.7,6.3 L7.5,1.3 M9.5,12.6 L14.2,7.9" stroke="#505050" stroke-width="0.9"/><path d="M5.5,4.2 L11,9.8" stroke="#5aa6e8" stroke-width="1"/><circle cx="5.5" cy="4.2" r="1.1" fill="#5aa6e8"/><circle cx="10.8" cy="9.8" r="1.2" fill="#5aa6e8"/></svg>
<svg style="left:1247px;top:312px" width="14" height="14"><rect x="1" y="6" width="9" height="6" fill="#2f86d8"/><path d="M9,5 L13,1 M10.5,1 H13 V3.5" stroke="#555" stroke-width="0.8" fill="none"/></svg>
<svg style="left:1228px;top:331.3px" width="14" height="14"><path d="M3,10 L8,2 L12,5 L7,12Z" fill="#1e6ac8"/><path d="M1,13 H12" stroke="#f07030" stroke-width="1.5"/></svg>
<svg style="left:1247px;top:331.3px" width="14" height="14"><path d="M2,13 V6 Q2,1 7,1 Q12,1 12,6 V13 L10,11 L8,13 L6,11 L4,13Z" fill="#2f86d8"/><circle cx="5.5" cy="6" r="1.2" fill="#fff"/><circle cx="8.5" cy="6" r="1.2" fill="#fff"/></svg>
<svg style="left:1228px;top:349.6px" width="14" height="14"><path d="M1,12 L10,2 L13,5 L4,13Z" fill="#f0b020"/><circle cx="7" cy="7" r="1.2" fill="#333"/></svg>
<svg style="left:1247px;top:349.6px" width="14" height="14"><circle cx="8" cy="9" r="4" fill="none" stroke="#333" stroke-width="1"/><path d="M1.5,1.5 L5,5" stroke="#333" stroke-width="1"/><path d="M1,1 L4,1.5 L1.5,4Z" fill="#333"/></svg>
<svg style="left:1228px;top:369px" width="14" height="14"><path d="M1,13 V4 L4,1 H9" fill="none" stroke="#2f86d8" stroke-width="1.3"/><path d="M3,12 H13" stroke="#2f86d8" stroke-width="1.5"/><circle cx="8" cy="6" r="4" fill="#e8eef8" stroke="#667" stroke-width="0.8"/></svg>
<svg style="left:1247px;top:369px" width="14" height="14"><rect x="1.5" y="4" width="11" height="8" rx="1.5" fill="#555"/><circle cx="7" cy="8" r="2.5" fill="#9ad"/><path d="M4,11 H10" stroke="#e33" stroke-width="1"/><path d="M5,12 H9" stroke="#3c3" stroke-width="1"/></svg>
<svg style="left:1228px;top:388.7px" width="14" height="14"><circle cx="6" cy="6" r="4.5" fill="#e8f0fa" stroke="#2f86d8" stroke-width="1"/><path d="M3,8 V13 H11 V8" fill="none" stroke="#2f86d8" stroke-width="1"/><path d="M6,6 L10,11" stroke="#335" stroke-width="0.8"/></svg>
<svg style="left:1247px;top:388.7px" width="14" height="14"><path d="M3,2 H8 V5 H12 V10 H8" fill="none" stroke="#333" stroke-width="0.8" stroke-dasharray="1.5 1"/><path d="M3,10 L6,8 V12Z" fill="#222"/></svg>
<svg style="left:1228px;top:407px" width="14" height="14"><path d="M4,13 Q1,9 2,6 L3,3 L4.5,6 L5,2 L6.5,6 L7.5,2 L8.5,6 L10,3.5 L10.5,8 Q10,13 4,13Z" fill="#f0b08a"/></svg>
<svg style="left:1247px;top:407px" width="14" height="14"><circle cx="6" cy="6" r="4.5" fill="#cfe5fa" stroke="#2f86d8" stroke-width="1.2"/><path d="M9,9 L12.5,12.5" stroke="#d08030" stroke-width="1.8"/></svg>
<div style="position:absolute;left:1226px;top:425px;width:38px;height:1px;background:#b0b0b0"></div>
<div style="position:absolute;left:1230px;top:432px;width:29px;height:1.3px;background:#888"></div>
<svg style="left:1232px;top:443px" width="26" height="4"><path d="M0,2 H26" stroke="#555" stroke-width="2.2" stroke-dasharray="4 2.5"/></svg>
<svg style="left:1234px;top:457px" width="22" height="8"><path d="M2,4 H20" stroke="#444" stroke-width="1.2"/><path d="M0,4 L5,1 L5,7Z M22,4 L17,1 L17,7Z" fill="#444"/><circle cx="11" cy="4" r="2" fill="#f0f0f0" stroke="#444" stroke-width="1"/></svg>
<svg style="left:1226px;top:472.8px" width="14" height="14"><path d="M3,10 L9,3 L11,5 L5,12Z" fill="none" stroke="#555" stroke-width="0.9"/><path d="M2,13 H9" stroke="#2f86d8" stroke-width="0.8"/></svg>
<div style="position:absolute;left:1242.6px;top:472.8px;width:18.8px;height:14.3px;background:#000"></div>
<svg style="left:1226px;top:492.7px" width="14" height="14"><path d="M2,7 L7,2 L11,6 L6,11Z" fill="#333"/><path d="M10,8 L12,12 L9,12Z" fill="#f07a20"/></svg>
<div style="position:absolute;left:1242.6px;top:492.4px;width:18.8px;height:14.3px;background:#fff;border:1px solid #ddd"></div>
<svg style="left:1242.6px;top:492.4px" width="19" height="15"><path d="M1,1 L18,14" stroke="#222" stroke-width="0.9"/></svg>
</body></html>
